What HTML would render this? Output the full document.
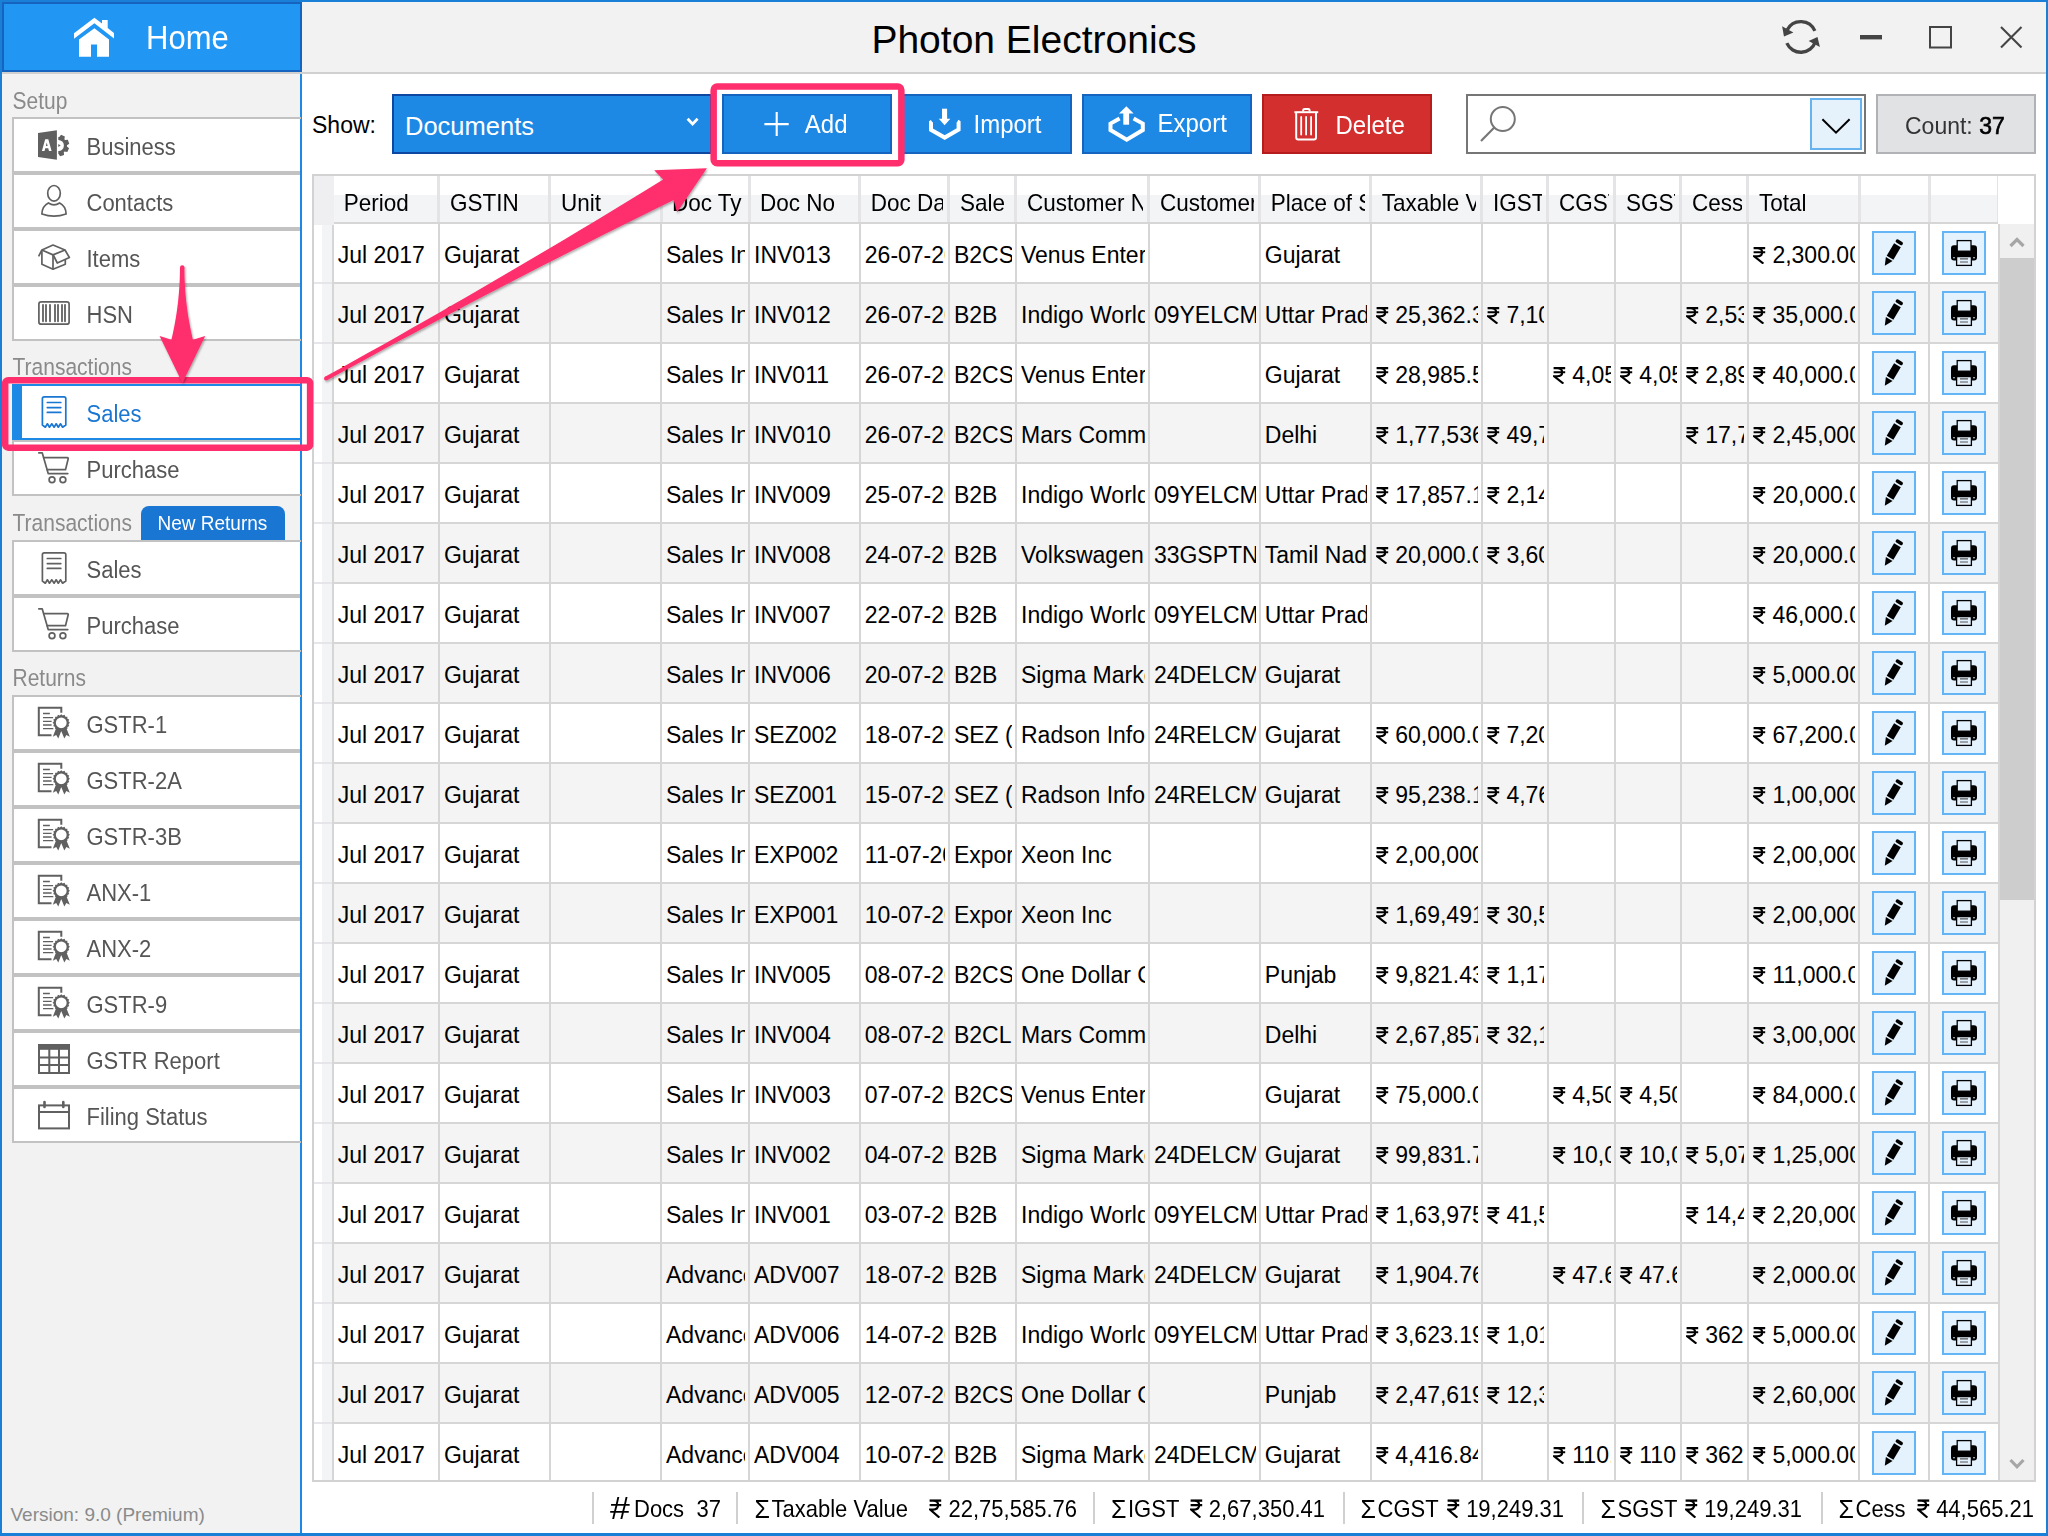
<!DOCTYPE html>
<html><head><meta charset="utf-8"><title>Photon Electronics</title>
<style>
html,body{margin:0;padding:0;}
body{width:2048px;height:1536px;overflow:hidden;position:relative;background:#fff;font-family:"Liberation Sans",sans-serif;}
.t{position:absolute;white-space:nowrap;}
.b{position:absolute;}
.c{position:absolute;white-space:nowrap;overflow:hidden;font-size:23px;color:#000;}
.rp{display:inline-block;width:13px;height:17px;vertical-align:-1px;margin-right:0px;}
svg.ov{position:absolute;left:0;top:0;}
</style></head><body>

<div class="b" style="left:2px;top:2px;width:2044px;height:70px;background:#f2f2f2;"></div>
<div class="b" style="left:2px;top:72px;width:2044px;height:2px;background:#d0d0d0;"></div>
<div class="b" style="left:2px;top:74px;width:298px;height:1459px;background:#f2f2f2;"></div>
<div class="b" style="left:300px;top:74px;width:2px;height:1459px;background:#1e88e5;"></div>
<div class="b" style="left:2px;top:2px;width:300px;height:70px;background:#2196f3;box-sizing:border-box;border:2px solid #1565c0;"></div>
<div class="t " style="left:146.0px;top:22.14px;font-size:31px;line-height:34.63px;color:#fff;transform:scaleY(1.05);transform-origin:0 28.06px;">Home</div>
<div class="t" style="left:302px;width:1464px;top:18.09px;font-size:39px;line-height:43.57px;text-align:center;color:#000;">Photon Electronics</div>
<div class="t " style="left:12.5px;top:89.79px;font-size:21px;line-height:23.46px;color:#8a8a8a;transform:scaleY(1.13);transform-origin:0 19.01px;">Setup</div>
<div class="b" style="left:12px;top:117px;width:289px;height:2px;background:#c2c2c2;"></div>
<div class="b" style="left:12px;top:117px;width:2px;height:224px;background:#c2c2c2;"></div>
<div class="b" style="left:12px;top:339px;width:289px;height:2px;background:#c2c2c2;"></div>
<div class="b" style="left:14px;top:119px;width:286px;height:52px;background:#fff;"></div>
<div class="b" style="left:14px;top:171px;width:286px;height:4px;background:#c2c2c2;"></div>
<div class="t " style="left:86.5px;top:135.88px;font-size:22px;line-height:24.58px;color:#555;transform:scaleY(1.09);transform-origin:0 19.92px;">Business</div>
<div class="b" style="left:14px;top:175px;width:286px;height:52px;background:#fff;"></div>
<div class="b" style="left:14px;top:227px;width:286px;height:4px;background:#c2c2c2;"></div>
<div class="t " style="left:86.5px;top:191.88px;font-size:22px;line-height:24.58px;color:#555;transform:scaleY(1.09);transform-origin:0 19.92px;">Contacts</div>
<div class="b" style="left:14px;top:231px;width:286px;height:52px;background:#fff;"></div>
<div class="b" style="left:14px;top:283px;width:286px;height:4px;background:#c2c2c2;"></div>
<div class="t " style="left:86.5px;top:247.88px;font-size:22px;line-height:24.58px;color:#555;transform:scaleY(1.09);transform-origin:0 19.92px;">Items</div>
<div class="b" style="left:14px;top:287px;width:286px;height:52px;background:#fff;"></div>
<div class="t " style="left:86.5px;top:303.88px;font-size:22px;line-height:24.58px;color:#555;transform:scaleY(1.09);transform-origin:0 19.92px;">HSN</div>
<div class="t " style="left:12.5px;top:356.29px;font-size:21px;line-height:23.46px;color:#8a8a8a;transform:scaleY(1.13);transform-origin:0 19.01px;">Transactions</div>
<div class="b" style="left:12px;top:384px;width:289px;height:2px;background:#c2c2c2;"></div>
<div class="b" style="left:12px;top:384px;width:2px;height:112px;background:#c2c2c2;"></div>
<div class="b" style="left:12px;top:494px;width:289px;height:2px;background:#c2c2c2;"></div>
<div class="b" style="left:14px;top:386px;width:286px;height:52px;background:#fff;"></div>
<div class="b" style="left:14px;top:438px;width:286px;height:4px;background:#c2c2c2;"></div>
<div class="t " style="left:86.5px;top:402.88px;font-size:22px;line-height:24.58px;color:#1976d2;transform:scaleY(1.09);transform-origin:0 19.92px;">Sales</div>
<div class="b" style="left:14px;top:442px;width:286px;height:52px;background:#fff;"></div>
<div class="t " style="left:86.5px;top:458.88px;font-size:22px;line-height:24.58px;color:#555;transform:scaleY(1.09);transform-origin:0 19.92px;">Purchase</div>
<div class="b" style="left:12px;top:384px;width:289px;height:2px;background:#1e88e5;"></div>
<div class="b" style="left:12px;top:438px;width:289px;height:2px;background:#1e88e5;"></div>
<div class="b" style="left:12px;top:384px;width:10px;height:56px;background:#1e88e5;"></div>
<div class="t " style="left:12.5px;top:511.79px;font-size:21px;line-height:23.46px;color:#8a8a8a;transform:scaleY(1.13);transform-origin:0 19.01px;">Transactions</div>
<div class="b" style="left:141px;top:506px;width:144px;height:34px;background:#1976d2;border-radius:8px 8px 0 0;"></div>
<div class="t " style="left:157.5px;top:512.60px;font-size:19px;line-height:21.23px;color:#fff;transform:scaleY(1.05);transform-origin:0 17.20px;">New Returns</div>
<div class="b" style="left:12px;top:540px;width:289px;height:2px;background:#c2c2c2;"></div>
<div class="b" style="left:12px;top:540px;width:2px;height:112px;background:#c2c2c2;"></div>
<div class="b" style="left:12px;top:650px;width:289px;height:2px;background:#c2c2c2;"></div>
<div class="b" style="left:14px;top:542px;width:286px;height:52px;background:#fff;"></div>
<div class="b" style="left:14px;top:594px;width:286px;height:4px;background:#c2c2c2;"></div>
<div class="t " style="left:86.5px;top:558.88px;font-size:22px;line-height:24.58px;color:#555;transform:scaleY(1.09);transform-origin:0 19.92px;">Sales</div>
<div class="b" style="left:14px;top:598px;width:286px;height:52px;background:#fff;"></div>
<div class="t " style="left:86.5px;top:614.88px;font-size:22px;line-height:24.58px;color:#555;transform:scaleY(1.09);transform-origin:0 19.92px;">Purchase</div>
<div class="t " style="left:12.5px;top:666.79px;font-size:21px;line-height:23.46px;color:#8a8a8a;transform:scaleY(1.13);transform-origin:0 19.01px;">Returns</div>
<div class="b" style="left:12px;top:695px;width:289px;height:2px;background:#c2c2c2;"></div>
<div class="b" style="left:12px;top:695px;width:2px;height:448px;background:#c2c2c2;"></div>
<div class="b" style="left:12px;top:1141px;width:289px;height:2px;background:#c2c2c2;"></div>
<div class="b" style="left:14px;top:697px;width:286px;height:52px;background:#fff;"></div>
<div class="b" style="left:14px;top:749px;width:286px;height:4px;background:#c2c2c2;"></div>
<div class="t " style="left:86.5px;top:713.88px;font-size:22px;line-height:24.58px;color:#555;transform:scaleY(1.09);transform-origin:0 19.92px;">GSTR-1</div>
<div class="b" style="left:14px;top:753px;width:286px;height:52px;background:#fff;"></div>
<div class="b" style="left:14px;top:805px;width:286px;height:4px;background:#c2c2c2;"></div>
<div class="t " style="left:86.5px;top:769.88px;font-size:22px;line-height:24.58px;color:#555;transform:scaleY(1.09);transform-origin:0 19.92px;">GSTR-2A</div>
<div class="b" style="left:14px;top:809px;width:286px;height:52px;background:#fff;"></div>
<div class="b" style="left:14px;top:861px;width:286px;height:4px;background:#c2c2c2;"></div>
<div class="t " style="left:86.5px;top:825.88px;font-size:22px;line-height:24.58px;color:#555;transform:scaleY(1.09);transform-origin:0 19.92px;">GSTR-3B</div>
<div class="b" style="left:14px;top:865px;width:286px;height:52px;background:#fff;"></div>
<div class="b" style="left:14px;top:917px;width:286px;height:4px;background:#c2c2c2;"></div>
<div class="t " style="left:86.5px;top:881.88px;font-size:22px;line-height:24.58px;color:#555;transform:scaleY(1.09);transform-origin:0 19.92px;">ANX-1</div>
<div class="b" style="left:14px;top:921px;width:286px;height:52px;background:#fff;"></div>
<div class="b" style="left:14px;top:973px;width:286px;height:4px;background:#c2c2c2;"></div>
<div class="t " style="left:86.5px;top:937.88px;font-size:22px;line-height:24.58px;color:#555;transform:scaleY(1.09);transform-origin:0 19.92px;">ANX-2</div>
<div class="b" style="left:14px;top:977px;width:286px;height:52px;background:#fff;"></div>
<div class="b" style="left:14px;top:1029px;width:286px;height:4px;background:#c2c2c2;"></div>
<div class="t " style="left:86.5px;top:993.88px;font-size:22px;line-height:24.58px;color:#555;transform:scaleY(1.09);transform-origin:0 19.92px;">GSTR-9</div>
<div class="b" style="left:14px;top:1033px;width:286px;height:52px;background:#fff;"></div>
<div class="b" style="left:14px;top:1085px;width:286px;height:4px;background:#c2c2c2;"></div>
<div class="t " style="left:86.5px;top:1049.88px;font-size:22px;line-height:24.58px;color:#555;transform:scaleY(1.09);transform-origin:0 19.92px;">GSTR Report</div>
<div class="b" style="left:14px;top:1089px;width:286px;height:52px;background:#fff;"></div>
<div class="t " style="left:86.5px;top:1105.88px;font-size:22px;line-height:24.58px;color:#555;transform:scaleY(1.09);transform-origin:0 19.92px;">Filing Status</div>
<div class="t " style="left:10.5px;top:1503.80px;font-size:19px;line-height:21.23px;color:#8a8a8a;">Version: 9.0 (Premium)</div>
<div class="t " style="left:312.0px;top:113.38px;font-size:23px;line-height:25.70px;color:#000;">Show:</div>
<div class="b" style="left:392px;top:94px;width:320px;height:60px;background:#1e88e5;box-sizing:border-box;border:2px solid #0d47a1;"></div>
<div class="t " style="left:405.0px;top:112.11px;font-size:25.5px;line-height:28.49px;color:#fff;">Documents</div>
<div class="b" style="left:722px;top:94px;width:170px;height:60px;background:#1e88e5;box-sizing:border-box;border:2px solid #1565c0;"></div>
<div class="t " style="left:804.8px;top:112.47px;font-size:24px;line-height:26.81px;color:#fff;transform:scaleY(1.06);transform-origin:0 21.73px;">Add</div>
<div class="b" style="left:902px;top:94px;width:170px;height:60px;background:#1e88e5;box-sizing:border-box;border:2px solid #1565c0;"></div>
<div class="t " style="left:973.5px;top:112.47px;font-size:24px;line-height:26.81px;color:#fff;transform:scaleY(1.06);transform-origin:0 21.73px;">Import</div>
<div class="b" style="left:1082px;top:94px;width:170px;height:60px;background:#1e88e5;box-sizing:border-box;border:2px solid #1565c0;"></div>
<div class="t " style="left:1157.5px;top:110.77px;font-size:24px;line-height:26.81px;color:#fff;transform:scaleY(1.06);transform-origin:0 21.73px;">Export</div>
<div class="b" style="left:1262px;top:94px;width:170px;height:60px;background:#d32f2f;box-sizing:border-box;border:2px solid #b71c1c;"></div>
<div class="t " style="left:1335.5px;top:112.67px;font-size:24px;line-height:26.81px;color:#fff;transform:scaleY(1.06);transform-origin:0 21.73px;">Delete</div>
<div class="b" style="left:1466px;top:94px;width:400px;height:60px;background:#fff;box-sizing:border-box;border:2px solid #767676;"></div>
<div class="b" style="left:1810px;top:98px;width:52px;height:52px;background:#e5f1fb;box-sizing:border-box;border:2px solid #66b3f0;"></div>
<div class="b" style="left:1876px;top:94px;width:160px;height:60px;background:#e1e2e4;box-sizing:border-box;border:2px solid #b0b2b6;"></div>
<div class="t " style="left:1905.0px;top:113.58px;font-size:23px;line-height:25.70px;color:#333;transform:scaleY(1.06);transform-origin:0 20.82px;">Count: <span style="color:#000;-webkit-text-stroke:0.6px #000;">37</span></div>
<div class="b" style="left:312px;top:174px;width:1724px;height:1308px;background:#fff;box-sizing:border-box;border:2px solid #d2d2d2;"></div>
<div class="b" style="left:314px;top:176px;width:1684px;height:19px;background:#ffffff;"></div>
<div class="b" style="left:314px;top:195px;width:1684px;height:27px;background:#f3f4f6;"></div>
<div class="b" style="left:314px;top:176px;width:20px;height:48px;background:#efeff1;"></div>
<div class="b" style="left:314px;top:222px;width:1684px;height:2px;background:#d6d6d6;"></div>
<div class="b" style="left:334px;top:224px;width:1664px;height:58px;background:#ffffff;"></div>
<div class="b" style="left:314px;top:224px;width:8px;height:58px;background:#ffffff;"></div>
<div class="b" style="left:322px;top:224px;width:10px;height:58px;background:#f3f4f6;"></div>
<div class="b" style="left:334px;top:282px;width:1664px;height:2px;background:#d6d6d6;"></div>
<div class="b" style="left:314px;top:282px;width:18px;height:3px;background:#e6e6ea;"></div>
<div class="b" style="left:334px;top:284px;width:1664px;height:58px;background:#f4f4f4;"></div>
<div class="b" style="left:314px;top:284px;width:8px;height:58px;background:#ffffff;"></div>
<div class="b" style="left:322px;top:284px;width:10px;height:58px;background:#f3f4f6;"></div>
<div class="b" style="left:334px;top:342px;width:1664px;height:2px;background:#d6d6d6;"></div>
<div class="b" style="left:314px;top:342px;width:18px;height:3px;background:#e6e6ea;"></div>
<div class="b" style="left:334px;top:344px;width:1664px;height:58px;background:#ffffff;"></div>
<div class="b" style="left:314px;top:344px;width:8px;height:58px;background:#ffffff;"></div>
<div class="b" style="left:322px;top:344px;width:10px;height:58px;background:#f3f4f6;"></div>
<div class="b" style="left:334px;top:402px;width:1664px;height:2px;background:#d6d6d6;"></div>
<div class="b" style="left:314px;top:402px;width:18px;height:3px;background:#e6e6ea;"></div>
<div class="b" style="left:334px;top:404px;width:1664px;height:58px;background:#f4f4f4;"></div>
<div class="b" style="left:314px;top:404px;width:8px;height:58px;background:#ffffff;"></div>
<div class="b" style="left:322px;top:404px;width:10px;height:58px;background:#f3f4f6;"></div>
<div class="b" style="left:334px;top:462px;width:1664px;height:2px;background:#d6d6d6;"></div>
<div class="b" style="left:314px;top:462px;width:18px;height:3px;background:#e6e6ea;"></div>
<div class="b" style="left:334px;top:464px;width:1664px;height:58px;background:#ffffff;"></div>
<div class="b" style="left:314px;top:464px;width:8px;height:58px;background:#ffffff;"></div>
<div class="b" style="left:322px;top:464px;width:10px;height:58px;background:#f3f4f6;"></div>
<div class="b" style="left:334px;top:522px;width:1664px;height:2px;background:#d6d6d6;"></div>
<div class="b" style="left:314px;top:522px;width:18px;height:3px;background:#e6e6ea;"></div>
<div class="b" style="left:334px;top:524px;width:1664px;height:58px;background:#f4f4f4;"></div>
<div class="b" style="left:314px;top:524px;width:8px;height:58px;background:#ffffff;"></div>
<div class="b" style="left:322px;top:524px;width:10px;height:58px;background:#f3f4f6;"></div>
<div class="b" style="left:334px;top:582px;width:1664px;height:2px;background:#d6d6d6;"></div>
<div class="b" style="left:314px;top:582px;width:18px;height:3px;background:#e6e6ea;"></div>
<div class="b" style="left:334px;top:584px;width:1664px;height:58px;background:#ffffff;"></div>
<div class="b" style="left:314px;top:584px;width:8px;height:58px;background:#ffffff;"></div>
<div class="b" style="left:322px;top:584px;width:10px;height:58px;background:#f3f4f6;"></div>
<div class="b" style="left:334px;top:642px;width:1664px;height:2px;background:#d6d6d6;"></div>
<div class="b" style="left:314px;top:642px;width:18px;height:3px;background:#e6e6ea;"></div>
<div class="b" style="left:334px;top:644px;width:1664px;height:58px;background:#f4f4f4;"></div>
<div class="b" style="left:314px;top:644px;width:8px;height:58px;background:#ffffff;"></div>
<div class="b" style="left:322px;top:644px;width:10px;height:58px;background:#f3f4f6;"></div>
<div class="b" style="left:334px;top:702px;width:1664px;height:2px;background:#d6d6d6;"></div>
<div class="b" style="left:314px;top:702px;width:18px;height:3px;background:#e6e6ea;"></div>
<div class="b" style="left:334px;top:704px;width:1664px;height:58px;background:#ffffff;"></div>
<div class="b" style="left:314px;top:704px;width:8px;height:58px;background:#ffffff;"></div>
<div class="b" style="left:322px;top:704px;width:10px;height:58px;background:#f3f4f6;"></div>
<div class="b" style="left:334px;top:762px;width:1664px;height:2px;background:#d6d6d6;"></div>
<div class="b" style="left:314px;top:762px;width:18px;height:3px;background:#e6e6ea;"></div>
<div class="b" style="left:334px;top:764px;width:1664px;height:58px;background:#f4f4f4;"></div>
<div class="b" style="left:314px;top:764px;width:8px;height:58px;background:#ffffff;"></div>
<div class="b" style="left:322px;top:764px;width:10px;height:58px;background:#f3f4f6;"></div>
<div class="b" style="left:334px;top:822px;width:1664px;height:2px;background:#d6d6d6;"></div>
<div class="b" style="left:314px;top:822px;width:18px;height:3px;background:#e6e6ea;"></div>
<div class="b" style="left:334px;top:824px;width:1664px;height:58px;background:#ffffff;"></div>
<div class="b" style="left:314px;top:824px;width:8px;height:58px;background:#ffffff;"></div>
<div class="b" style="left:322px;top:824px;width:10px;height:58px;background:#f3f4f6;"></div>
<div class="b" style="left:334px;top:882px;width:1664px;height:2px;background:#d6d6d6;"></div>
<div class="b" style="left:314px;top:882px;width:18px;height:3px;background:#e6e6ea;"></div>
<div class="b" style="left:334px;top:884px;width:1664px;height:58px;background:#f4f4f4;"></div>
<div class="b" style="left:314px;top:884px;width:8px;height:58px;background:#ffffff;"></div>
<div class="b" style="left:322px;top:884px;width:10px;height:58px;background:#f3f4f6;"></div>
<div class="b" style="left:334px;top:942px;width:1664px;height:2px;background:#d6d6d6;"></div>
<div class="b" style="left:314px;top:942px;width:18px;height:3px;background:#e6e6ea;"></div>
<div class="b" style="left:334px;top:944px;width:1664px;height:58px;background:#ffffff;"></div>
<div class="b" style="left:314px;top:944px;width:8px;height:58px;background:#ffffff;"></div>
<div class="b" style="left:322px;top:944px;width:10px;height:58px;background:#f3f4f6;"></div>
<div class="b" style="left:334px;top:1002px;width:1664px;height:2px;background:#d6d6d6;"></div>
<div class="b" style="left:314px;top:1002px;width:18px;height:3px;background:#e6e6ea;"></div>
<div class="b" style="left:334px;top:1004px;width:1664px;height:58px;background:#f4f4f4;"></div>
<div class="b" style="left:314px;top:1004px;width:8px;height:58px;background:#ffffff;"></div>
<div class="b" style="left:322px;top:1004px;width:10px;height:58px;background:#f3f4f6;"></div>
<div class="b" style="left:334px;top:1062px;width:1664px;height:2px;background:#d6d6d6;"></div>
<div class="b" style="left:314px;top:1062px;width:18px;height:3px;background:#e6e6ea;"></div>
<div class="b" style="left:334px;top:1064px;width:1664px;height:58px;background:#ffffff;"></div>
<div class="b" style="left:314px;top:1064px;width:8px;height:58px;background:#ffffff;"></div>
<div class="b" style="left:322px;top:1064px;width:10px;height:58px;background:#f3f4f6;"></div>
<div class="b" style="left:334px;top:1122px;width:1664px;height:2px;background:#d6d6d6;"></div>
<div class="b" style="left:314px;top:1122px;width:18px;height:3px;background:#e6e6ea;"></div>
<div class="b" style="left:334px;top:1124px;width:1664px;height:58px;background:#f4f4f4;"></div>
<div class="b" style="left:314px;top:1124px;width:8px;height:58px;background:#ffffff;"></div>
<div class="b" style="left:322px;top:1124px;width:10px;height:58px;background:#f3f4f6;"></div>
<div class="b" style="left:334px;top:1182px;width:1664px;height:2px;background:#d6d6d6;"></div>
<div class="b" style="left:314px;top:1182px;width:18px;height:3px;background:#e6e6ea;"></div>
<div class="b" style="left:334px;top:1184px;width:1664px;height:58px;background:#ffffff;"></div>
<div class="b" style="left:314px;top:1184px;width:8px;height:58px;background:#ffffff;"></div>
<div class="b" style="left:322px;top:1184px;width:10px;height:58px;background:#f3f4f6;"></div>
<div class="b" style="left:334px;top:1242px;width:1664px;height:2px;background:#d6d6d6;"></div>
<div class="b" style="left:314px;top:1242px;width:18px;height:3px;background:#e6e6ea;"></div>
<div class="b" style="left:334px;top:1244px;width:1664px;height:58px;background:#f4f4f4;"></div>
<div class="b" style="left:314px;top:1244px;width:8px;height:58px;background:#ffffff;"></div>
<div class="b" style="left:322px;top:1244px;width:10px;height:58px;background:#f3f4f6;"></div>
<div class="b" style="left:334px;top:1302px;width:1664px;height:2px;background:#d6d6d6;"></div>
<div class="b" style="left:314px;top:1302px;width:18px;height:3px;background:#e6e6ea;"></div>
<div class="b" style="left:334px;top:1304px;width:1664px;height:58px;background:#ffffff;"></div>
<div class="b" style="left:314px;top:1304px;width:8px;height:58px;background:#ffffff;"></div>
<div class="b" style="left:322px;top:1304px;width:10px;height:58px;background:#f3f4f6;"></div>
<div class="b" style="left:334px;top:1362px;width:1664px;height:2px;background:#d6d6d6;"></div>
<div class="b" style="left:314px;top:1362px;width:18px;height:3px;background:#e6e6ea;"></div>
<div class="b" style="left:334px;top:1364px;width:1664px;height:58px;background:#f4f4f4;"></div>
<div class="b" style="left:314px;top:1364px;width:8px;height:58px;background:#ffffff;"></div>
<div class="b" style="left:322px;top:1364px;width:10px;height:58px;background:#f3f4f6;"></div>
<div class="b" style="left:334px;top:1422px;width:1664px;height:2px;background:#d6d6d6;"></div>
<div class="b" style="left:314px;top:1422px;width:18px;height:3px;background:#e6e6ea;"></div>
<div class="b" style="left:334px;top:1424px;width:1664px;height:56px;background:#ffffff;"></div>
<div class="b" style="left:314px;top:1424px;width:8px;height:56px;background:#ffffff;"></div>
<div class="b" style="left:322px;top:1424px;width:10px;height:56px;background:#f3f4f6;"></div>
<div class="b" style="left:332px;top:224px;width:2px;height:1256px;background:#d6d6d6;"></div>
<div class="b" style="left:438px;top:224px;width:2px;height:1256px;background:#d6d6d6;"></div>
<div class="b" style="left:549px;top:224px;width:2px;height:1256px;background:#d6d6d6;"></div>
<div class="b" style="left:660px;top:224px;width:2px;height:1256px;background:#d6d6d6;"></div>
<div class="b" style="left:748px;top:224px;width:2px;height:1256px;background:#d6d6d6;"></div>
<div class="b" style="left:859px;top:224px;width:2px;height:1256px;background:#d6d6d6;"></div>
<div class="b" style="left:948px;top:224px;width:2px;height:1256px;background:#d6d6d6;"></div>
<div class="b" style="left:1015px;top:224px;width:2px;height:1256px;background:#d6d6d6;"></div>
<div class="b" style="left:1148px;top:224px;width:2px;height:1256px;background:#d6d6d6;"></div>
<div class="b" style="left:1259px;top:224px;width:2px;height:1256px;background:#d6d6d6;"></div>
<div class="b" style="left:1370px;top:224px;width:2px;height:1256px;background:#d6d6d6;"></div>
<div class="b" style="left:1481px;top:224px;width:2px;height:1256px;background:#d6d6d6;"></div>
<div class="b" style="left:1547px;top:224px;width:2px;height:1256px;background:#d6d6d6;"></div>
<div class="b" style="left:1614px;top:224px;width:2px;height:1256px;background:#d6d6d6;"></div>
<div class="b" style="left:1680px;top:224px;width:2px;height:1256px;background:#d6d6d6;"></div>
<div class="b" style="left:1747px;top:224px;width:2px;height:1256px;background:#d6d6d6;"></div>
<div class="b" style="left:1858px;top:224px;width:2px;height:1256px;background:#d6d6d6;"></div>
<div class="b" style="left:1928px;top:224px;width:2px;height:1256px;background:#d6d6d6;"></div>
<div class="b" style="left:1998px;top:224px;width:2px;height:1256px;background:#d6d6d6;"></div>
<div class="b" style="left:437px;top:176px;width:3px;height:46px;background:#e4e4e6;"></div>
<div class="b" style="left:548px;top:176px;width:3px;height:46px;background:#e4e4e6;"></div>
<div class="b" style="left:660px;top:176px;width:3px;height:46px;background:#e4e4e6;"></div>
<div class="b" style="left:748px;top:176px;width:3px;height:46px;background:#e4e4e6;"></div>
<div class="b" style="left:858px;top:176px;width:3px;height:46px;background:#e4e4e6;"></div>
<div class="b" style="left:947px;top:176px;width:3px;height:46px;background:#e4e4e6;"></div>
<div class="b" style="left:1014px;top:176px;width:3px;height:46px;background:#e4e4e6;"></div>
<div class="b" style="left:1147px;top:176px;width:3px;height:46px;background:#e4e4e6;"></div>
<div class="b" style="left:1258px;top:176px;width:3px;height:46px;background:#e4e4e6;"></div>
<div class="b" style="left:1369px;top:176px;width:3px;height:46px;background:#e4e4e6;"></div>
<div class="b" style="left:1480px;top:176px;width:3px;height:46px;background:#e4e4e6;"></div>
<div class="b" style="left:1546px;top:176px;width:3px;height:46px;background:#e4e4e6;"></div>
<div class="b" style="left:1613px;top:176px;width:3px;height:46px;background:#e4e4e6;"></div>
<div class="b" style="left:1679px;top:176px;width:3px;height:46px;background:#e4e4e6;"></div>
<div class="b" style="left:1746px;top:176px;width:3px;height:46px;background:#e4e4e6;"></div>
<div class="b" style="left:1858px;top:176px;width:3px;height:46px;background:#e4e4e6;"></div>
<div class="b" style="left:1928px;top:176px;width:3px;height:46px;background:#e4e4e6;"></div>
<div class="b" style="left:1997px;top:176px;width:3px;height:46px;background:#e4e4e6;"></div>
<div class="b" style="left:314px;top:176px;width:20px;height:49px;background:#efeff1;"></div>
<div class="c" style="left:343.8px;top:190.53px;width:89.1px;font-size:22.5px;line-height:25.14px;transform:scaleY(1.04);transform-origin:0 20.37px;">Period</div>
<div class="c" style="left:449.9px;top:190.53px;width:94.0px;font-size:22.5px;line-height:25.14px;transform:scaleY(1.04);transform-origin:0 20.37px;">GSTIN</div>
<div class="c" style="left:560.9px;top:190.53px;width:94.1px;font-size:22.5px;line-height:25.14px;transform:scaleY(1.04);transform-origin:0 20.37px;">Unit</div>
<div class="c" style="left:672.0px;top:190.53px;width:71.0px;font-size:22.5px;line-height:25.14px;transform:scaleY(1.04);transform-origin:0 20.37px;">Doc Type</div>
<div class="c" style="left:760.0px;top:190.53px;width:93.8px;font-size:22.5px;line-height:25.14px;transform:scaleY(1.04);transform-origin:0 20.37px;">Doc No</div>
<div class="c" style="left:870.8px;top:190.53px;width:72.1px;font-size:22.5px;line-height:25.14px;transform:scaleY(1.04);transform-origin:0 20.37px;">Doc Date</div>
<div class="c" style="left:959.9px;top:190.53px;width:50.1px;font-size:22.5px;line-height:25.14px;transform:scaleY(1.04);transform-origin:0 20.37px;">Sale Type</div>
<div class="c" style="left:1027.0px;top:190.53px;width:115.9px;font-size:22.5px;line-height:25.14px;transform:scaleY(1.04);transform-origin:0 20.37px;">Customer Name</div>
<div class="c" style="left:1159.9px;top:190.53px;width:93.8px;font-size:22.5px;line-height:25.14px;transform:scaleY(1.04);transform-origin:0 20.37px;">Customer GSTIN</div>
<div class="c" style="left:1270.8px;top:190.53px;width:94.0px;font-size:22.5px;line-height:25.14px;transform:scaleY(1.04);transform-origin:0 20.37px;">Place of Supply</div>
<div class="c" style="left:1381.8px;top:190.53px;width:94.2px;font-size:22.5px;line-height:25.14px;transform:scaleY(1.04);transform-origin:0 20.37px;">Taxable Value</div>
<div class="c" style="left:1493.0px;top:190.53px;width:48.9px;font-size:22.5px;line-height:25.14px;transform:scaleY(1.04);transform-origin:0 20.37px;">IGST</div>
<div class="c" style="left:1558.9px;top:190.53px;width:50.0px;font-size:22.5px;line-height:25.14px;transform:scaleY(1.04);transform-origin:0 20.37px;">CGST</div>
<div class="c" style="left:1625.9px;top:190.53px;width:49.0px;font-size:22.5px;line-height:25.14px;transform:scaleY(1.04);transform-origin:0 20.37px;">SGST</div>
<div class="c" style="left:1691.9px;top:190.53px;width:50.1px;font-size:22.5px;line-height:25.14px;transform:scaleY(1.04);transform-origin:0 20.37px;">Cess</div>
<div class="c" style="left:1759.0px;top:190.53px;width:94.0px;font-size:22.5px;line-height:25.14px;transform:scaleY(1.04);transform-origin:0 20.37px;">Total</div>
<div class="c" style="left:337.8px;top:242.68px;width:97.1px;line-height:25.70px;">Jul 2017</div>
<div class="c" style="left:443.9px;top:242.68px;width:102.0px;line-height:25.70px;">Gujarat</div>
<div class="c" style="left:666.0px;top:242.68px;width:79.0px;line-height:25.70px;">Sales Invoice</div>
<div class="c" style="left:754.0px;top:242.68px;width:101.8px;line-height:25.70px;">INV013</div>
<div class="c" style="left:864.8px;top:242.68px;width:80.1px;line-height:25.70px;">26-07-2017</div>
<div class="c" style="left:953.9px;top:242.68px;width:58.1px;line-height:25.70px;">B2CS</div>
<div class="c" style="left:1021.0px;top:242.68px;width:123.9px;line-height:25.70px;">Venus Enterprises</div>
<div class="c" style="left:1264.8px;top:242.68px;width:102.0px;line-height:25.70px;">Gujarat</div>
<div class="c" style="left:1753.0px;top:242.68px;width:102.0px;line-height:25.70px;"><svg class="rp" viewBox="0 0 13 17"><use href="#rup"/></svg> 2,300.00</div>
<div class="b" style="left:1872px;top:231px;width:44px;height:44px;background:#e3f2fd;box-sizing:border-box;border:2px solid #64b5f6;"></div>
<div class="b" style="left:1942px;top:231px;width:44px;height:44px;background:#e3f2fd;box-sizing:border-box;border:2px solid #64b5f6;"></div>
<div class="c" style="left:337.8px;top:302.68px;width:97.1px;line-height:25.70px;">Jul 2017</div>
<div class="c" style="left:443.9px;top:302.68px;width:102.0px;line-height:25.70px;">Gujarat</div>
<div class="c" style="left:666.0px;top:302.68px;width:79.0px;line-height:25.70px;">Sales Invoice</div>
<div class="c" style="left:754.0px;top:302.68px;width:101.8px;line-height:25.70px;">INV012</div>
<div class="c" style="left:864.8px;top:302.68px;width:80.1px;line-height:25.70px;">26-07-2017</div>
<div class="c" style="left:953.9px;top:302.68px;width:58.1px;line-height:25.70px;">B2B</div>
<div class="c" style="left:1021.0px;top:302.68px;width:123.9px;line-height:25.70px;">Indigo World</div>
<div class="c" style="left:1153.9px;top:302.68px;width:101.8px;line-height:25.70px;">09YELCM5678A1Z1</div>
<div class="c" style="left:1264.8px;top:302.68px;width:102.0px;line-height:25.70px;">Uttar Pradesh</div>
<div class="c" style="left:1375.8px;top:302.68px;width:102.2px;line-height:25.70px;"><svg class="rp" viewBox="0 0 13 17"><use href="#rup"/></svg> 25,362.32</div>
<div class="c" style="left:1487.0px;top:302.68px;width:56.9px;line-height:25.70px;"><svg class="rp" viewBox="0 0 13 17"><use href="#rup"/></svg> 7,101.45</div>
<div class="c" style="left:1685.9px;top:302.68px;width:58.1px;line-height:25.70px;"><svg class="rp" viewBox="0 0 13 17"><use href="#rup"/></svg> 2,536.23</div>
<div class="c" style="left:1753.0px;top:302.68px;width:102.0px;line-height:25.70px;"><svg class="rp" viewBox="0 0 13 17"><use href="#rup"/></svg> 35,000.00</div>
<div class="b" style="left:1872px;top:291px;width:44px;height:44px;background:#e3f2fd;box-sizing:border-box;border:2px solid #64b5f6;"></div>
<div class="b" style="left:1942px;top:291px;width:44px;height:44px;background:#e3f2fd;box-sizing:border-box;border:2px solid #64b5f6;"></div>
<div class="c" style="left:337.8px;top:362.68px;width:97.1px;line-height:25.70px;">Jul 2017</div>
<div class="c" style="left:443.9px;top:362.68px;width:102.0px;line-height:25.70px;">Gujarat</div>
<div class="c" style="left:666.0px;top:362.68px;width:79.0px;line-height:25.70px;">Sales Invoice</div>
<div class="c" style="left:754.0px;top:362.68px;width:101.8px;line-height:25.70px;">INV011</div>
<div class="c" style="left:864.8px;top:362.68px;width:80.1px;line-height:25.70px;">26-07-2017</div>
<div class="c" style="left:953.9px;top:362.68px;width:58.1px;line-height:25.70px;">B2CS</div>
<div class="c" style="left:1021.0px;top:362.68px;width:123.9px;line-height:25.70px;">Venus Enterprises</div>
<div class="c" style="left:1264.8px;top:362.68px;width:102.0px;line-height:25.70px;">Gujarat</div>
<div class="c" style="left:1375.8px;top:362.68px;width:102.2px;line-height:25.70px;"><svg class="rp" viewBox="0 0 13 17"><use href="#rup"/></svg> 28,985.51</div>
<div class="c" style="left:1552.9px;top:362.68px;width:58.0px;line-height:25.70px;"><svg class="rp" viewBox="0 0 13 17"><use href="#rup"/></svg> 4,057.97</div>
<div class="c" style="left:1619.9px;top:362.68px;width:57.0px;line-height:25.70px;"><svg class="rp" viewBox="0 0 13 17"><use href="#rup"/></svg> 4,057.97</div>
<div class="c" style="left:1685.9px;top:362.68px;width:58.1px;line-height:25.70px;"><svg class="rp" viewBox="0 0 13 17"><use href="#rup"/></svg> 2,898.55</div>
<div class="c" style="left:1753.0px;top:362.68px;width:102.0px;line-height:25.70px;"><svg class="rp" viewBox="0 0 13 17"><use href="#rup"/></svg> 40,000.00</div>
<div class="b" style="left:1872px;top:351px;width:44px;height:44px;background:#e3f2fd;box-sizing:border-box;border:2px solid #64b5f6;"></div>
<div class="b" style="left:1942px;top:351px;width:44px;height:44px;background:#e3f2fd;box-sizing:border-box;border:2px solid #64b5f6;"></div>
<div class="c" style="left:337.8px;top:422.68px;width:97.1px;line-height:25.70px;">Jul 2017</div>
<div class="c" style="left:443.9px;top:422.68px;width:102.0px;line-height:25.70px;">Gujarat</div>
<div class="c" style="left:666.0px;top:422.68px;width:79.0px;line-height:25.70px;">Sales Invoice</div>
<div class="c" style="left:754.0px;top:422.68px;width:101.8px;line-height:25.70px;">INV010</div>
<div class="c" style="left:864.8px;top:422.68px;width:80.1px;line-height:25.70px;">26-07-2017</div>
<div class="c" style="left:953.9px;top:422.68px;width:58.1px;line-height:25.70px;">B2CS</div>
<div class="c" style="left:1021.0px;top:422.68px;width:123.9px;line-height:25.70px;">Mars Communications</div>
<div class="c" style="left:1264.8px;top:422.68px;width:102.0px;line-height:25.70px;">Delhi</div>
<div class="c" style="left:1375.8px;top:422.68px;width:102.2px;line-height:25.70px;"><svg class="rp" viewBox="0 0 13 17"><use href="#rup"/></svg> 1,77,536.23</div>
<div class="c" style="left:1487.0px;top:422.68px;width:56.9px;line-height:25.70px;"><svg class="rp" viewBox="0 0 13 17"><use href="#rup"/></svg> 49,710.14</div>
<div class="c" style="left:1685.9px;top:422.68px;width:58.1px;line-height:25.70px;"><svg class="rp" viewBox="0 0 13 17"><use href="#rup"/></svg> 17,753.62</div>
<div class="c" style="left:1753.0px;top:422.68px;width:102.0px;line-height:25.70px;"><svg class="rp" viewBox="0 0 13 17"><use href="#rup"/></svg> 2,45,000.00</div>
<div class="b" style="left:1872px;top:411px;width:44px;height:44px;background:#e3f2fd;box-sizing:border-box;border:2px solid #64b5f6;"></div>
<div class="b" style="left:1942px;top:411px;width:44px;height:44px;background:#e3f2fd;box-sizing:border-box;border:2px solid #64b5f6;"></div>
<div class="c" style="left:337.8px;top:482.68px;width:97.1px;line-height:25.70px;">Jul 2017</div>
<div class="c" style="left:443.9px;top:482.68px;width:102.0px;line-height:25.70px;">Gujarat</div>
<div class="c" style="left:666.0px;top:482.68px;width:79.0px;line-height:25.70px;">Sales Invoice</div>
<div class="c" style="left:754.0px;top:482.68px;width:101.8px;line-height:25.70px;">INV009</div>
<div class="c" style="left:864.8px;top:482.68px;width:80.1px;line-height:25.70px;">25-07-2017</div>
<div class="c" style="left:953.9px;top:482.68px;width:58.1px;line-height:25.70px;">B2B</div>
<div class="c" style="left:1021.0px;top:482.68px;width:123.9px;line-height:25.70px;">Indigo World</div>
<div class="c" style="left:1153.9px;top:482.68px;width:101.8px;line-height:25.70px;">09YELCM5678A1Z1</div>
<div class="c" style="left:1264.8px;top:482.68px;width:102.0px;line-height:25.70px;">Uttar Pradesh</div>
<div class="c" style="left:1375.8px;top:482.68px;width:102.2px;line-height:25.70px;"><svg class="rp" viewBox="0 0 13 17"><use href="#rup"/></svg> 17,857.14</div>
<div class="c" style="left:1487.0px;top:482.68px;width:56.9px;line-height:25.70px;"><svg class="rp" viewBox="0 0 13 17"><use href="#rup"/></svg> 2,142.86</div>
<div class="c" style="left:1753.0px;top:482.68px;width:102.0px;line-height:25.70px;"><svg class="rp" viewBox="0 0 13 17"><use href="#rup"/></svg> 20,000.00</div>
<div class="b" style="left:1872px;top:471px;width:44px;height:44px;background:#e3f2fd;box-sizing:border-box;border:2px solid #64b5f6;"></div>
<div class="b" style="left:1942px;top:471px;width:44px;height:44px;background:#e3f2fd;box-sizing:border-box;border:2px solid #64b5f6;"></div>
<div class="c" style="left:337.8px;top:542.68px;width:97.1px;line-height:25.70px;">Jul 2017</div>
<div class="c" style="left:443.9px;top:542.68px;width:102.0px;line-height:25.70px;">Gujarat</div>
<div class="c" style="left:666.0px;top:542.68px;width:79.0px;line-height:25.70px;">Sales Invoice</div>
<div class="c" style="left:754.0px;top:542.68px;width:101.8px;line-height:25.70px;">INV008</div>
<div class="c" style="left:864.8px;top:542.68px;width:80.1px;line-height:25.70px;">24-07-2017</div>
<div class="c" style="left:953.9px;top:542.68px;width:58.1px;line-height:25.70px;">B2B</div>
<div class="c" style="left:1021.0px;top:542.68px;width:123.9px;line-height:25.70px;">Volkswagen</div>
<div class="c" style="left:1153.9px;top:542.68px;width:101.8px;line-height:25.70px;">33GSPTN8765A1Z1</div>
<div class="c" style="left:1264.8px;top:542.68px;width:102.0px;line-height:25.70px;">Tamil Nadu</div>
<div class="c" style="left:1375.8px;top:542.68px;width:102.2px;line-height:25.70px;"><svg class="rp" viewBox="0 0 13 17"><use href="#rup"/></svg> 20,000.00</div>
<div class="c" style="left:1487.0px;top:542.68px;width:56.9px;line-height:25.70px;"><svg class="rp" viewBox="0 0 13 17"><use href="#rup"/></svg> 3,600.00</div>
<div class="c" style="left:1753.0px;top:542.68px;width:102.0px;line-height:25.70px;"><svg class="rp" viewBox="0 0 13 17"><use href="#rup"/></svg> 20,000.00</div>
<div class="b" style="left:1872px;top:531px;width:44px;height:44px;background:#e3f2fd;box-sizing:border-box;border:2px solid #64b5f6;"></div>
<div class="b" style="left:1942px;top:531px;width:44px;height:44px;background:#e3f2fd;box-sizing:border-box;border:2px solid #64b5f6;"></div>
<div class="c" style="left:337.8px;top:602.68px;width:97.1px;line-height:25.70px;">Jul 2017</div>
<div class="c" style="left:443.9px;top:602.68px;width:102.0px;line-height:25.70px;">Gujarat</div>
<div class="c" style="left:666.0px;top:602.68px;width:79.0px;line-height:25.70px;">Sales Invoice</div>
<div class="c" style="left:754.0px;top:602.68px;width:101.8px;line-height:25.70px;">INV007</div>
<div class="c" style="left:864.8px;top:602.68px;width:80.1px;line-height:25.70px;">22-07-2017</div>
<div class="c" style="left:953.9px;top:602.68px;width:58.1px;line-height:25.70px;">B2B</div>
<div class="c" style="left:1021.0px;top:602.68px;width:123.9px;line-height:25.70px;">Indigo World</div>
<div class="c" style="left:1153.9px;top:602.68px;width:101.8px;line-height:25.70px;">09YELCM5678A1Z1</div>
<div class="c" style="left:1264.8px;top:602.68px;width:102.0px;line-height:25.70px;">Uttar Pradesh</div>
<div class="c" style="left:1753.0px;top:602.68px;width:102.0px;line-height:25.70px;"><svg class="rp" viewBox="0 0 13 17"><use href="#rup"/></svg> 46,000.00</div>
<div class="b" style="left:1872px;top:591px;width:44px;height:44px;background:#e3f2fd;box-sizing:border-box;border:2px solid #64b5f6;"></div>
<div class="b" style="left:1942px;top:591px;width:44px;height:44px;background:#e3f2fd;box-sizing:border-box;border:2px solid #64b5f6;"></div>
<div class="c" style="left:337.8px;top:662.68px;width:97.1px;line-height:25.70px;">Jul 2017</div>
<div class="c" style="left:443.9px;top:662.68px;width:102.0px;line-height:25.70px;">Gujarat</div>
<div class="c" style="left:666.0px;top:662.68px;width:79.0px;line-height:25.70px;">Sales Invoice</div>
<div class="c" style="left:754.0px;top:662.68px;width:101.8px;line-height:25.70px;">INV006</div>
<div class="c" style="left:864.8px;top:662.68px;width:80.1px;line-height:25.70px;">20-07-2017</div>
<div class="c" style="left:953.9px;top:662.68px;width:58.1px;line-height:25.70px;">B2B</div>
<div class="c" style="left:1021.0px;top:662.68px;width:123.9px;line-height:25.70px;">Sigma Marketing</div>
<div class="c" style="left:1153.9px;top:662.68px;width:101.8px;line-height:25.70px;">24DELCM1234A1Z1</div>
<div class="c" style="left:1264.8px;top:662.68px;width:102.0px;line-height:25.70px;">Gujarat</div>
<div class="c" style="left:1753.0px;top:662.68px;width:102.0px;line-height:25.70px;"><svg class="rp" viewBox="0 0 13 17"><use href="#rup"/></svg> 5,000.00</div>
<div class="b" style="left:1872px;top:651px;width:44px;height:44px;background:#e3f2fd;box-sizing:border-box;border:2px solid #64b5f6;"></div>
<div class="b" style="left:1942px;top:651px;width:44px;height:44px;background:#e3f2fd;box-sizing:border-box;border:2px solid #64b5f6;"></div>
<div class="c" style="left:337.8px;top:722.68px;width:97.1px;line-height:25.70px;">Jul 2017</div>
<div class="c" style="left:443.9px;top:722.68px;width:102.0px;line-height:25.70px;">Gujarat</div>
<div class="c" style="left:666.0px;top:722.68px;width:79.0px;line-height:25.70px;">Sales Invoice</div>
<div class="c" style="left:754.0px;top:722.68px;width:101.8px;line-height:25.70px;">SEZ002</div>
<div class="c" style="left:864.8px;top:722.68px;width:80.1px;line-height:25.70px;">18-07-2017</div>
<div class="c" style="left:953.9px;top:722.68px;width:58.1px;line-height:25.70px;">SEZ (with payment)</div>
<div class="c" style="left:1021.0px;top:722.68px;width:123.9px;line-height:25.70px;">Radson Infotech</div>
<div class="c" style="left:1153.9px;top:722.68px;width:101.8px;line-height:25.70px;">24RELCM4321A1Z1</div>
<div class="c" style="left:1264.8px;top:722.68px;width:102.0px;line-height:25.70px;">Gujarat</div>
<div class="c" style="left:1375.8px;top:722.68px;width:102.2px;line-height:25.70px;"><svg class="rp" viewBox="0 0 13 17"><use href="#rup"/></svg> 60,000.00</div>
<div class="c" style="left:1487.0px;top:722.68px;width:56.9px;line-height:25.70px;"><svg class="rp" viewBox="0 0 13 17"><use href="#rup"/></svg> 7,200.00</div>
<div class="c" style="left:1753.0px;top:722.68px;width:102.0px;line-height:25.70px;"><svg class="rp" viewBox="0 0 13 17"><use href="#rup"/></svg> 67,200.00</div>
<div class="b" style="left:1872px;top:711px;width:44px;height:44px;background:#e3f2fd;box-sizing:border-box;border:2px solid #64b5f6;"></div>
<div class="b" style="left:1942px;top:711px;width:44px;height:44px;background:#e3f2fd;box-sizing:border-box;border:2px solid #64b5f6;"></div>
<div class="c" style="left:337.8px;top:782.68px;width:97.1px;line-height:25.70px;">Jul 2017</div>
<div class="c" style="left:443.9px;top:782.68px;width:102.0px;line-height:25.70px;">Gujarat</div>
<div class="c" style="left:666.0px;top:782.68px;width:79.0px;line-height:25.70px;">Sales Invoice</div>
<div class="c" style="left:754.0px;top:782.68px;width:101.8px;line-height:25.70px;">SEZ001</div>
<div class="c" style="left:864.8px;top:782.68px;width:80.1px;line-height:25.70px;">15-07-2017</div>
<div class="c" style="left:953.9px;top:782.68px;width:58.1px;line-height:25.70px;">SEZ (without payment)</div>
<div class="c" style="left:1021.0px;top:782.68px;width:123.9px;line-height:25.70px;">Radson Infotech</div>
<div class="c" style="left:1153.9px;top:782.68px;width:101.8px;line-height:25.70px;">24RELCM4321A1Z1</div>
<div class="c" style="left:1264.8px;top:782.68px;width:102.0px;line-height:25.70px;">Gujarat</div>
<div class="c" style="left:1375.8px;top:782.68px;width:102.2px;line-height:25.70px;"><svg class="rp" viewBox="0 0 13 17"><use href="#rup"/></svg> 95,238.10</div>
<div class="c" style="left:1487.0px;top:782.68px;width:56.9px;line-height:25.70px;"><svg class="rp" viewBox="0 0 13 17"><use href="#rup"/></svg> 4,761.90</div>
<div class="c" style="left:1753.0px;top:782.68px;width:102.0px;line-height:25.70px;"><svg class="rp" viewBox="0 0 13 17"><use href="#rup"/></svg> 1,00,000.00</div>
<div class="b" style="left:1872px;top:771px;width:44px;height:44px;background:#e3f2fd;box-sizing:border-box;border:2px solid #64b5f6;"></div>
<div class="b" style="left:1942px;top:771px;width:44px;height:44px;background:#e3f2fd;box-sizing:border-box;border:2px solid #64b5f6;"></div>
<div class="c" style="left:337.8px;top:842.68px;width:97.1px;line-height:25.70px;">Jul 2017</div>
<div class="c" style="left:443.9px;top:842.68px;width:102.0px;line-height:25.70px;">Gujarat</div>
<div class="c" style="left:666.0px;top:842.68px;width:79.0px;line-height:25.70px;">Sales Invoice</div>
<div class="c" style="left:754.0px;top:842.68px;width:101.8px;line-height:25.70px;">EXP002</div>
<div class="c" style="left:864.8px;top:842.68px;width:80.1px;line-height:25.70px;">11-07-2017</div>
<div class="c" style="left:953.9px;top:842.68px;width:58.1px;line-height:25.70px;">Export</div>
<div class="c" style="left:1021.0px;top:842.68px;width:123.9px;line-height:25.70px;">Xeon Inc</div>
<div class="c" style="left:1375.8px;top:842.68px;width:102.2px;line-height:25.70px;"><svg class="rp" viewBox="0 0 13 17"><use href="#rup"/></svg> 2,00,000.00</div>
<div class="c" style="left:1753.0px;top:842.68px;width:102.0px;line-height:25.70px;"><svg class="rp" viewBox="0 0 13 17"><use href="#rup"/></svg> 2,00,000.00</div>
<div class="b" style="left:1872px;top:831px;width:44px;height:44px;background:#e3f2fd;box-sizing:border-box;border:2px solid #64b5f6;"></div>
<div class="b" style="left:1942px;top:831px;width:44px;height:44px;background:#e3f2fd;box-sizing:border-box;border:2px solid #64b5f6;"></div>
<div class="c" style="left:337.8px;top:902.68px;width:97.1px;line-height:25.70px;">Jul 2017</div>
<div class="c" style="left:443.9px;top:902.68px;width:102.0px;line-height:25.70px;">Gujarat</div>
<div class="c" style="left:666.0px;top:902.68px;width:79.0px;line-height:25.70px;">Sales Invoice</div>
<div class="c" style="left:754.0px;top:902.68px;width:101.8px;line-height:25.70px;">EXP001</div>
<div class="c" style="left:864.8px;top:902.68px;width:80.1px;line-height:25.70px;">10-07-2017</div>
<div class="c" style="left:953.9px;top:902.68px;width:58.1px;line-height:25.70px;">Export</div>
<div class="c" style="left:1021.0px;top:902.68px;width:123.9px;line-height:25.70px;">Xeon Inc</div>
<div class="c" style="left:1375.8px;top:902.68px;width:102.2px;line-height:25.70px;"><svg class="rp" viewBox="0 0 13 17"><use href="#rup"/></svg> 1,69,491.53</div>
<div class="c" style="left:1487.0px;top:902.68px;width:56.9px;line-height:25.70px;"><svg class="rp" viewBox="0 0 13 17"><use href="#rup"/></svg> 30,508.47</div>
<div class="c" style="left:1753.0px;top:902.68px;width:102.0px;line-height:25.70px;"><svg class="rp" viewBox="0 0 13 17"><use href="#rup"/></svg> 2,00,000.00</div>
<div class="b" style="left:1872px;top:891px;width:44px;height:44px;background:#e3f2fd;box-sizing:border-box;border:2px solid #64b5f6;"></div>
<div class="b" style="left:1942px;top:891px;width:44px;height:44px;background:#e3f2fd;box-sizing:border-box;border:2px solid #64b5f6;"></div>
<div class="c" style="left:337.8px;top:962.68px;width:97.1px;line-height:25.70px;">Jul 2017</div>
<div class="c" style="left:443.9px;top:962.68px;width:102.0px;line-height:25.70px;">Gujarat</div>
<div class="c" style="left:666.0px;top:962.68px;width:79.0px;line-height:25.70px;">Sales Invoice</div>
<div class="c" style="left:754.0px;top:962.68px;width:101.8px;line-height:25.70px;">INV005</div>
<div class="c" style="left:864.8px;top:962.68px;width:80.1px;line-height:25.70px;">08-07-2017</div>
<div class="c" style="left:953.9px;top:962.68px;width:58.1px;line-height:25.70px;">B2CS</div>
<div class="c" style="left:1021.0px;top:962.68px;width:123.9px;line-height:25.70px;">One Dollar Café</div>
<div class="c" style="left:1264.8px;top:962.68px;width:102.0px;line-height:25.70px;">Punjab</div>
<div class="c" style="left:1375.8px;top:962.68px;width:102.2px;line-height:25.70px;"><svg class="rp" viewBox="0 0 13 17"><use href="#rup"/></svg> 9,821.43</div>
<div class="c" style="left:1487.0px;top:962.68px;width:56.9px;line-height:25.70px;"><svg class="rp" viewBox="0 0 13 17"><use href="#rup"/></svg> 1,178.57</div>
<div class="c" style="left:1753.0px;top:962.68px;width:102.0px;line-height:25.70px;"><svg class="rp" viewBox="0 0 13 17"><use href="#rup"/></svg> 11,000.00</div>
<div class="b" style="left:1872px;top:951px;width:44px;height:44px;background:#e3f2fd;box-sizing:border-box;border:2px solid #64b5f6;"></div>
<div class="b" style="left:1942px;top:951px;width:44px;height:44px;background:#e3f2fd;box-sizing:border-box;border:2px solid #64b5f6;"></div>
<div class="c" style="left:337.8px;top:1022.68px;width:97.1px;line-height:25.70px;">Jul 2017</div>
<div class="c" style="left:443.9px;top:1022.68px;width:102.0px;line-height:25.70px;">Gujarat</div>
<div class="c" style="left:666.0px;top:1022.68px;width:79.0px;line-height:25.70px;">Sales Invoice</div>
<div class="c" style="left:754.0px;top:1022.68px;width:101.8px;line-height:25.70px;">INV004</div>
<div class="c" style="left:864.8px;top:1022.68px;width:80.1px;line-height:25.70px;">08-07-2017</div>
<div class="c" style="left:953.9px;top:1022.68px;width:58.1px;line-height:25.70px;">B2CL</div>
<div class="c" style="left:1021.0px;top:1022.68px;width:123.9px;line-height:25.70px;">Mars Communications</div>
<div class="c" style="left:1264.8px;top:1022.68px;width:102.0px;line-height:25.70px;">Delhi</div>
<div class="c" style="left:1375.8px;top:1022.68px;width:102.2px;line-height:25.70px;"><svg class="rp" viewBox="0 0 13 17"><use href="#rup"/></svg> 2,67,857.14</div>
<div class="c" style="left:1487.0px;top:1022.68px;width:56.9px;line-height:25.70px;"><svg class="rp" viewBox="0 0 13 17"><use href="#rup"/></svg> 32,142.86</div>
<div class="c" style="left:1753.0px;top:1022.68px;width:102.0px;line-height:25.70px;"><svg class="rp" viewBox="0 0 13 17"><use href="#rup"/></svg> 3,00,000.00</div>
<div class="b" style="left:1872px;top:1011px;width:44px;height:44px;background:#e3f2fd;box-sizing:border-box;border:2px solid #64b5f6;"></div>
<div class="b" style="left:1942px;top:1011px;width:44px;height:44px;background:#e3f2fd;box-sizing:border-box;border:2px solid #64b5f6;"></div>
<div class="c" style="left:337.8px;top:1082.68px;width:97.1px;line-height:25.70px;">Jul 2017</div>
<div class="c" style="left:443.9px;top:1082.68px;width:102.0px;line-height:25.70px;">Gujarat</div>
<div class="c" style="left:666.0px;top:1082.68px;width:79.0px;line-height:25.70px;">Sales Invoice</div>
<div class="c" style="left:754.0px;top:1082.68px;width:101.8px;line-height:25.70px;">INV003</div>
<div class="c" style="left:864.8px;top:1082.68px;width:80.1px;line-height:25.70px;">07-07-2017</div>
<div class="c" style="left:953.9px;top:1082.68px;width:58.1px;line-height:25.70px;">B2CS</div>
<div class="c" style="left:1021.0px;top:1082.68px;width:123.9px;line-height:25.70px;">Venus Enterprises</div>
<div class="c" style="left:1264.8px;top:1082.68px;width:102.0px;line-height:25.70px;">Gujarat</div>
<div class="c" style="left:1375.8px;top:1082.68px;width:102.2px;line-height:25.70px;"><svg class="rp" viewBox="0 0 13 17"><use href="#rup"/></svg> 75,000.00</div>
<div class="c" style="left:1552.9px;top:1082.68px;width:58.0px;line-height:25.70px;"><svg class="rp" viewBox="0 0 13 17"><use href="#rup"/></svg> 4,500.00</div>
<div class="c" style="left:1619.9px;top:1082.68px;width:57.0px;line-height:25.70px;"><svg class="rp" viewBox="0 0 13 17"><use href="#rup"/></svg> 4,500.00</div>
<div class="c" style="left:1753.0px;top:1082.68px;width:102.0px;line-height:25.70px;"><svg class="rp" viewBox="0 0 13 17"><use href="#rup"/></svg> 84,000.00</div>
<div class="b" style="left:1872px;top:1071px;width:44px;height:44px;background:#e3f2fd;box-sizing:border-box;border:2px solid #64b5f6;"></div>
<div class="b" style="left:1942px;top:1071px;width:44px;height:44px;background:#e3f2fd;box-sizing:border-box;border:2px solid #64b5f6;"></div>
<div class="c" style="left:337.8px;top:1142.68px;width:97.1px;line-height:25.70px;">Jul 2017</div>
<div class="c" style="left:443.9px;top:1142.68px;width:102.0px;line-height:25.70px;">Gujarat</div>
<div class="c" style="left:666.0px;top:1142.68px;width:79.0px;line-height:25.70px;">Sales Invoice</div>
<div class="c" style="left:754.0px;top:1142.68px;width:101.8px;line-height:25.70px;">INV002</div>
<div class="c" style="left:864.8px;top:1142.68px;width:80.1px;line-height:25.70px;">04-07-2017</div>
<div class="c" style="left:953.9px;top:1142.68px;width:58.1px;line-height:25.70px;">B2B</div>
<div class="c" style="left:1021.0px;top:1142.68px;width:123.9px;line-height:25.70px;">Sigma Marketing</div>
<div class="c" style="left:1153.9px;top:1142.68px;width:101.8px;line-height:25.70px;">24DELCM1234A1Z1</div>
<div class="c" style="left:1264.8px;top:1142.68px;width:102.0px;line-height:25.70px;">Gujarat</div>
<div class="c" style="left:1375.8px;top:1142.68px;width:102.2px;line-height:25.70px;"><svg class="rp" viewBox="0 0 13 17"><use href="#rup"/></svg> 99,831.79</div>
<div class="c" style="left:1552.9px;top:1142.68px;width:58.0px;line-height:25.70px;"><svg class="rp" viewBox="0 0 13 17"><use href="#rup"/></svg> 10,084.03</div>
<div class="c" style="left:1619.9px;top:1142.68px;width:57.0px;line-height:25.70px;"><svg class="rp" viewBox="0 0 13 17"><use href="#rup"/></svg> 10,084.03</div>
<div class="c" style="left:1685.9px;top:1142.68px;width:58.1px;line-height:25.70px;"><svg class="rp" viewBox="0 0 13 17"><use href="#rup"/></svg> 5,070.00</div>
<div class="c" style="left:1753.0px;top:1142.68px;width:102.0px;line-height:25.70px;"><svg class="rp" viewBox="0 0 13 17"><use href="#rup"/></svg> 1,25,000.00</div>
<div class="b" style="left:1872px;top:1131px;width:44px;height:44px;background:#e3f2fd;box-sizing:border-box;border:2px solid #64b5f6;"></div>
<div class="b" style="left:1942px;top:1131px;width:44px;height:44px;background:#e3f2fd;box-sizing:border-box;border:2px solid #64b5f6;"></div>
<div class="c" style="left:337.8px;top:1202.68px;width:97.1px;line-height:25.70px;">Jul 2017</div>
<div class="c" style="left:443.9px;top:1202.68px;width:102.0px;line-height:25.70px;">Gujarat</div>
<div class="c" style="left:666.0px;top:1202.68px;width:79.0px;line-height:25.70px;">Sales Invoice</div>
<div class="c" style="left:754.0px;top:1202.68px;width:101.8px;line-height:25.70px;">INV001</div>
<div class="c" style="left:864.8px;top:1202.68px;width:80.1px;line-height:25.70px;">03-07-2017</div>
<div class="c" style="left:953.9px;top:1202.68px;width:58.1px;line-height:25.70px;">B2B</div>
<div class="c" style="left:1021.0px;top:1202.68px;width:123.9px;line-height:25.70px;">Indigo World</div>
<div class="c" style="left:1153.9px;top:1202.68px;width:101.8px;line-height:25.70px;">09YELCM5678A1Z1</div>
<div class="c" style="left:1264.8px;top:1202.68px;width:102.0px;line-height:25.70px;">Uttar Pradesh</div>
<div class="c" style="left:1375.8px;top:1202.68px;width:102.2px;line-height:25.70px;"><svg class="rp" viewBox="0 0 13 17"><use href="#rup"/></svg> 1,63,975.00</div>
<div class="c" style="left:1487.0px;top:1202.68px;width:56.9px;line-height:25.70px;"><svg class="rp" viewBox="0 0 13 17"><use href="#rup"/></svg> 41,512.00</div>
<div class="c" style="left:1685.9px;top:1202.68px;width:58.1px;line-height:25.70px;"><svg class="rp" viewBox="0 0 13 17"><use href="#rup"/></svg> 14,437.00</div>
<div class="c" style="left:1753.0px;top:1202.68px;width:102.0px;line-height:25.70px;"><svg class="rp" viewBox="0 0 13 17"><use href="#rup"/></svg> 2,20,000.00</div>
<div class="b" style="left:1872px;top:1191px;width:44px;height:44px;background:#e3f2fd;box-sizing:border-box;border:2px solid #64b5f6;"></div>
<div class="b" style="left:1942px;top:1191px;width:44px;height:44px;background:#e3f2fd;box-sizing:border-box;border:2px solid #64b5f6;"></div>
<div class="c" style="left:337.8px;top:1262.68px;width:97.1px;line-height:25.70px;">Jul 2017</div>
<div class="c" style="left:443.9px;top:1262.68px;width:102.0px;line-height:25.70px;">Gujarat</div>
<div class="c" style="left:666.0px;top:1262.68px;width:79.0px;line-height:25.70px;">Advance Receipt</div>
<div class="c" style="left:754.0px;top:1262.68px;width:101.8px;line-height:25.70px;">ADV007</div>
<div class="c" style="left:864.8px;top:1262.68px;width:80.1px;line-height:25.70px;">18-07-2017</div>
<div class="c" style="left:953.9px;top:1262.68px;width:58.1px;line-height:25.70px;">B2B</div>
<div class="c" style="left:1021.0px;top:1262.68px;width:123.9px;line-height:25.70px;">Sigma Marketing</div>
<div class="c" style="left:1153.9px;top:1262.68px;width:101.8px;line-height:25.70px;">24DELCM1234A1Z1</div>
<div class="c" style="left:1264.8px;top:1262.68px;width:102.0px;line-height:25.70px;">Gujarat</div>
<div class="c" style="left:1375.8px;top:1262.68px;width:102.2px;line-height:25.70px;"><svg class="rp" viewBox="0 0 13 17"><use href="#rup"/></svg> 1,904.76</div>
<div class="c" style="left:1552.9px;top:1262.68px;width:58.0px;line-height:25.70px;"><svg class="rp" viewBox="0 0 13 17"><use href="#rup"/></svg> 47.62</div>
<div class="c" style="left:1619.9px;top:1262.68px;width:57.0px;line-height:25.70px;"><svg class="rp" viewBox="0 0 13 17"><use href="#rup"/></svg> 47.62</div>
<div class="c" style="left:1753.0px;top:1262.68px;width:102.0px;line-height:25.70px;"><svg class="rp" viewBox="0 0 13 17"><use href="#rup"/></svg> 2,000.00</div>
<div class="b" style="left:1872px;top:1251px;width:44px;height:44px;background:#e3f2fd;box-sizing:border-box;border:2px solid #64b5f6;"></div>
<div class="b" style="left:1942px;top:1251px;width:44px;height:44px;background:#e3f2fd;box-sizing:border-box;border:2px solid #64b5f6;"></div>
<div class="c" style="left:337.8px;top:1322.68px;width:97.1px;line-height:25.70px;">Jul 2017</div>
<div class="c" style="left:443.9px;top:1322.68px;width:102.0px;line-height:25.70px;">Gujarat</div>
<div class="c" style="left:666.0px;top:1322.68px;width:79.0px;line-height:25.70px;">Advance Receipt</div>
<div class="c" style="left:754.0px;top:1322.68px;width:101.8px;line-height:25.70px;">ADV006</div>
<div class="c" style="left:864.8px;top:1322.68px;width:80.1px;line-height:25.70px;">14-07-2017</div>
<div class="c" style="left:953.9px;top:1322.68px;width:58.1px;line-height:25.70px;">B2B</div>
<div class="c" style="left:1021.0px;top:1322.68px;width:123.9px;line-height:25.70px;">Indigo World</div>
<div class="c" style="left:1153.9px;top:1322.68px;width:101.8px;line-height:25.70px;">09YELCM5678A1Z1</div>
<div class="c" style="left:1264.8px;top:1322.68px;width:102.0px;line-height:25.70px;">Uttar Pradesh</div>
<div class="c" style="left:1375.8px;top:1322.68px;width:102.2px;line-height:25.70px;"><svg class="rp" viewBox="0 0 13 17"><use href="#rup"/></svg> 3,623.19</div>
<div class="c" style="left:1487.0px;top:1322.68px;width:56.9px;line-height:25.70px;"><svg class="rp" viewBox="0 0 13 17"><use href="#rup"/></svg> 1,014.49</div>
<div class="c" style="left:1685.9px;top:1322.68px;width:58.1px;line-height:25.70px;"><svg class="rp" viewBox="0 0 13 17"><use href="#rup"/></svg> 362.32</div>
<div class="c" style="left:1753.0px;top:1322.68px;width:102.0px;line-height:25.70px;"><svg class="rp" viewBox="0 0 13 17"><use href="#rup"/></svg> 5,000.00</div>
<div class="b" style="left:1872px;top:1311px;width:44px;height:44px;background:#e3f2fd;box-sizing:border-box;border:2px solid #64b5f6;"></div>
<div class="b" style="left:1942px;top:1311px;width:44px;height:44px;background:#e3f2fd;box-sizing:border-box;border:2px solid #64b5f6;"></div>
<div class="c" style="left:337.8px;top:1382.68px;width:97.1px;line-height:25.70px;">Jul 2017</div>
<div class="c" style="left:443.9px;top:1382.68px;width:102.0px;line-height:25.70px;">Gujarat</div>
<div class="c" style="left:666.0px;top:1382.68px;width:79.0px;line-height:25.70px;">Advance Receipt</div>
<div class="c" style="left:754.0px;top:1382.68px;width:101.8px;line-height:25.70px;">ADV005</div>
<div class="c" style="left:864.8px;top:1382.68px;width:80.1px;line-height:25.70px;">12-07-2017</div>
<div class="c" style="left:953.9px;top:1382.68px;width:58.1px;line-height:25.70px;">B2CS</div>
<div class="c" style="left:1021.0px;top:1382.68px;width:123.9px;line-height:25.70px;">One Dollar Café</div>
<div class="c" style="left:1264.8px;top:1382.68px;width:102.0px;line-height:25.70px;">Punjab</div>
<div class="c" style="left:1375.8px;top:1382.68px;width:102.2px;line-height:25.70px;"><svg class="rp" viewBox="0 0 13 17"><use href="#rup"/></svg> 2,47,619.05</div>
<div class="c" style="left:1487.0px;top:1382.68px;width:56.9px;line-height:25.70px;"><svg class="rp" viewBox="0 0 13 17"><use href="#rup"/></svg> 12,380.95</div>
<div class="c" style="left:1753.0px;top:1382.68px;width:102.0px;line-height:25.70px;"><svg class="rp" viewBox="0 0 13 17"><use href="#rup"/></svg> 2,60,000.00</div>
<div class="b" style="left:1872px;top:1371px;width:44px;height:44px;background:#e3f2fd;box-sizing:border-box;border:2px solid #64b5f6;"></div>
<div class="b" style="left:1942px;top:1371px;width:44px;height:44px;background:#e3f2fd;box-sizing:border-box;border:2px solid #64b5f6;"></div>
<div class="c" style="left:337.8px;top:1442.68px;width:97.1px;line-height:25.70px;">Jul 2017</div>
<div class="c" style="left:443.9px;top:1442.68px;width:102.0px;line-height:25.70px;">Gujarat</div>
<div class="c" style="left:666.0px;top:1442.68px;width:79.0px;line-height:25.70px;">Advance Receipt</div>
<div class="c" style="left:754.0px;top:1442.68px;width:101.8px;line-height:25.70px;">ADV004</div>
<div class="c" style="left:864.8px;top:1442.68px;width:80.1px;line-height:25.70px;">10-07-2017</div>
<div class="c" style="left:953.9px;top:1442.68px;width:58.1px;line-height:25.70px;">B2B</div>
<div class="c" style="left:1021.0px;top:1442.68px;width:123.9px;line-height:25.70px;">Sigma Marketing</div>
<div class="c" style="left:1153.9px;top:1442.68px;width:101.8px;line-height:25.70px;">24DELCM1234A1Z1</div>
<div class="c" style="left:1264.8px;top:1442.68px;width:102.0px;line-height:25.70px;">Gujarat</div>
<div class="c" style="left:1375.8px;top:1442.68px;width:102.2px;line-height:25.70px;"><svg class="rp" viewBox="0 0 13 17"><use href="#rup"/></svg> 4,416.84</div>
<div class="c" style="left:1552.9px;top:1442.68px;width:58.0px;line-height:25.70px;"><svg class="rp" viewBox="0 0 13 17"><use href="#rup"/></svg> 110.42</div>
<div class="c" style="left:1619.9px;top:1442.68px;width:57.0px;line-height:25.70px;"><svg class="rp" viewBox="0 0 13 17"><use href="#rup"/></svg> 110.42</div>
<div class="c" style="left:1685.9px;top:1442.68px;width:58.1px;line-height:25.70px;"><svg class="rp" viewBox="0 0 13 17"><use href="#rup"/></svg> 362.32</div>
<div class="c" style="left:1753.0px;top:1442.68px;width:102.0px;line-height:25.70px;"><svg class="rp" viewBox="0 0 13 17"><use href="#rup"/></svg> 5,000.00</div>
<div class="b" style="left:1872px;top:1431px;width:44px;height:44px;background:#e3f2fd;box-sizing:border-box;border:2px solid #64b5f6;"></div>
<div class="b" style="left:1942px;top:1431px;width:44px;height:44px;background:#e3f2fd;box-sizing:border-box;border:2px solid #64b5f6;"></div>
<div class="b" style="left:312px;top:1480px;width:1724px;height:2px;background:#d2d2d2;"></div>
<div class="b" style="left:1998px;top:176px;width:36px;height:48px;background:#ffffff;"></div>
<div class="b" style="left:2000px;top:224px;width:34px;height:1256px;background:#f0f0f0;"></div>
<div class="b" style="left:2000px;top:258px;width:34px;height:642px;background:#cdcdcd;"></div>
<div class="b" style="left:592px;top:1492px;width:2px;height:32px;background:#d0d0d0;"></div>
<div class="b" style="left:736px;top:1492px;width:2px;height:32px;background:#d0d0d0;"></div>
<div class="b" style="left:1093px;top:1492px;width:2px;height:32px;background:#d0d0d0;"></div>
<div class="b" style="left:1343px;top:1492px;width:2px;height:32px;background:#d0d0d0;"></div>
<div class="b" style="left:1582px;top:1492px;width:2px;height:32px;background:#d0d0d0;"></div>
<div class="b" style="left:1821px;top:1492px;width:2px;height:32px;background:#d0d0d0;"></div>
<div class="t " style="left:609.5px;top:1492.14px;font-size:31px;line-height:34.63px;color:#000;font-weight:normal;transform:scaleX(1.15);transform-origin:0 28px;">#</div>
<div class="t " style="left:634.0px;top:1498.48px;font-size:22px;line-height:24.58px;color:#000;transform:scaleY(1.1);transform-origin:0 19.92px;">Docs</div>
<div class="t" style="right:1327.0px;top:1498.48px;font-size:22px;line-height:24.58px;transform:scaleY(1.1);transform-origin:0 19.92px;">37</div>
<div class="t " style="left:754.5px;top:1495.77px;font-size:25px;line-height:27.93px;color:#000;transform:scaleY(1.05);transform-origin:0 22.63px;">Σ</div>
<div class="t " style="left:771.5px;top:1498.48px;font-size:22px;line-height:24.58px;color:#000;transform:scaleY(1.1);transform-origin:0 19.92px;">Taxable Value</div>
<div class="t" style="right:971.0px;top:1498.48px;font-size:22px;line-height:24.58px;color:#000;transform:scaleY(1.1);transform-origin:0 19.92px;"><svg class="rp" viewBox="0 0 13 17"><use href="#rup"/></svg> 22,75,585.76</div>
<div class="t " style="left:1111.0px;top:1495.77px;font-size:25px;line-height:27.93px;color:#000;transform:scaleY(1.05);transform-origin:0 22.63px;">Σ</div>
<div class="t " style="left:1128.0px;top:1498.48px;font-size:22px;line-height:24.58px;color:#000;transform:scaleY(1.1);transform-origin:0 19.92px;">IGST</div>
<div class="t" style="right:723.0px;top:1498.48px;font-size:22px;line-height:24.58px;color:#000;transform:scaleY(1.1);transform-origin:0 19.92px;"><svg class="rp" viewBox="0 0 13 17"><use href="#rup"/></svg> 2,67,350.41</div>
<div class="t " style="left:1360.5px;top:1495.77px;font-size:25px;line-height:27.93px;color:#000;transform:scaleY(1.05);transform-origin:0 22.63px;">Σ</div>
<div class="t " style="left:1377.5px;top:1498.48px;font-size:22px;line-height:24.58px;color:#000;transform:scaleY(1.1);transform-origin:0 19.92px;">CGST</div>
<div class="t" style="right:484.0px;top:1498.48px;font-size:22px;line-height:24.58px;color:#000;transform:scaleY(1.1);transform-origin:0 19.92px;"><svg class="rp" viewBox="0 0 13 17"><use href="#rup"/></svg> 19,249.31</div>
<div class="t " style="left:1600.5px;top:1495.77px;font-size:25px;line-height:27.93px;color:#000;transform:scaleY(1.05);transform-origin:0 22.63px;">Σ</div>
<div class="t " style="left:1617.5px;top:1498.48px;font-size:22px;line-height:24.58px;color:#000;transform:scaleY(1.1);transform-origin:0 19.92px;">SGST</div>
<div class="t" style="right:246.0px;top:1498.48px;font-size:22px;line-height:24.58px;color:#000;transform:scaleY(1.1);transform-origin:0 19.92px;"><svg class="rp" viewBox="0 0 13 17"><use href="#rup"/></svg> 19,249.31</div>
<div class="t " style="left:1838.5px;top:1495.77px;font-size:25px;line-height:27.93px;color:#000;transform:scaleY(1.05);transform-origin:0 22.63px;">Σ</div>
<div class="t " style="left:1855.5px;top:1498.48px;font-size:22px;line-height:24.58px;color:#000;transform:scaleY(1.1);transform-origin:0 19.92px;">Cess</div>
<div class="t" style="right:14.0px;top:1498.48px;font-size:22px;line-height:24.58px;color:#000;transform:scaleY(1.1);transform-origin:0 19.92px;"><svg class="rp" viewBox="0 0 13 17"><use href="#rup"/></svg> 44,565.21</div>
<div class="b" style="left:0px;top:0px;width:2048px;height:2px;background:#1a7fd6;"></div>
<div class="b" style="left:0px;top:0px;width:2px;height:1536px;background:#1a7fd6;"></div>
<div class="b" style="left:2046px;top:0px;width:2px;height:1536px;background:#1a7fd6;"></div>
<div class="b" style="left:0px;top:1533px;width:2048px;height:3px;background:#1a7fd6;"></div>
<svg class="ov" width="2048" height="1536" viewBox="0 0 2048 1536">
<defs><symbol id="rup" viewBox="0 0 13 17"><path d="M0.6,1.1H12.2M0.6,5.3H12.2M0.8,1.1H4.2C7.6,1.1 9.2,2.9 9.2,5.2C9.2,7.6 7.4,9.3 4.2,9.3H1.2L10.4,16.6" fill="none" stroke="#000" stroke-width="2.1"/></symbol>
<filter id="sh" x="-5%" y="-5%" width="110%" height="110%"><feDropShadow dx="1" dy="1.5" stdDeviation="1.2" flood-color="#000" flood-opacity="0.35"/></filter></defs>
<path d="M74,33.3 L94.4,17.7 L102,23.6 V20 H107.7 V28.1 L114,33 V38.6 L94.4,23.2 L74,38.7Z" fill="#fff"/>
<path d="M79,39.4 L94.4,28.2 L109,39.4 V56.8 H97 V44.5 H91 V56.8 H79Z" fill="#fff"/>
<g fill="none" stroke="#444" stroke-width="3.3"><path d="M1787.29,29.77 A15.3,15.3 0 0 1 1814.88,30.97"/><path d="M1786.82,43.17 A15.3,15.3 0 0 0 1815.35,41.68"/></g>
<path d="M1782.1,26.3 L1784,36.5 L1793.4,32.4Z" fill="#444"/>
<path d="M1808.6,40.9 L1817.5,37 L1819.9,46.9Z" fill="#444"/>
<rect x="1860" y="35" width="22" height="4.4" fill="#444"/>
<rect x="1930" y="27" width="21" height="20.5" fill="none" stroke="#444" stroke-width="2"/>
<path d="M2001,27 L2021.5,47.5 M2021.5,27 L2001,47.5" stroke="#444" stroke-width="2.1"/>
<g transform="translate(0,0)"><path d="M38,133.1 L56.9,130.2 V159.8 L38,157.1Z" fill="#606060"/><path fill="#fff" fill-rule="evenodd" d="M41.9,151 L45.2,139.3 H48.3 L51.6,151 H49 L48.2,148.2 H45.3 L44.5,151Z M45.9,145.9 H47.6 L46.75,142.4Z"/>
<clipPath id="gc"><rect x="58.3" y="120" width="20" height="50"/></clipPath>
<path d="M66.95,146.40 L69.07,148.16 L67.30,151.97 L64.59,151.47 L63.81,152.18 L64.07,154.93 L60.12,156.36 L58.55,154.10 L57.50,154.05 L55.74,156.17 L51.93,154.40 L52.43,151.69 L51.72,150.91 L48.97,151.17 L47.54,147.22 L49.80,145.65 L49.85,144.60 L47.73,142.84 L49.50,139.03 L52.21,139.53 L52.99,138.82 L52.73,136.07 L56.68,134.64 L58.25,136.90 L59.30,136.95 L61.06,134.83 L64.87,136.60 L64.37,139.31 L65.08,140.09 L67.83,139.83 L69.26,143.78 L67.00,145.35Z M63.9,145.5 A5.5,5.5 0 1 0 52.9,145.5 A5.5,5.5 0 1 0 63.9,145.5Z" fill="#606060" fill-rule="evenodd" clip-path="url(#gc)"/><path d="M58.3,144.1 L60.7,145.5 L58.3,146.9Z" fill="#606060"/></g>
<g fill="none" stroke="#606060" stroke-width="1.7"><ellipse cx="54" cy="193.3" rx="6.3" ry="7.8"/><path d="M48.4,203 Q54,206.7 59.6,203 C64,205.2 66,209.5 66.1,214 Q54,218.3 41.9,214 C42,209.5 44,205.2 48.4,203Z"/></g>
<g fill="none" stroke="#606060" stroke-width="1.7" stroke-linejoin="round"><path d="M41.9,250 L53,245 L65,250 L53,254.9Z"/><path d="M41.9,250 V264.2 L53,269.2 V254.9"/><path d="M53,269.2 L65.3,264.2 V259.5"/><path d="M65,250 L69.4,257.5 L57.3,263 L53.5,255.5"/><path d="M41.9,250 L38.6,256.3"/></g>
<rect x="38.9" y="301.8" width="30.2" height="22.4" rx="2.3" fill="none" stroke="#606060" stroke-width="1.7"/>
<g stroke="#606060" stroke-width="1.8" stroke-linecap="round"><path d="M43,304.8 V321.3"/><path d="M46,304.8 V321.3"/><path d="M50,304.8 V321.3"/><path d="M55,304.8 V321.3"/><path d="M58,304.8 V321.3"/><path d="M62,304.8 V321.3"/><path d="M65,304.8 V321.3"/></g>
<g transform="translate(0,-156)" fill="none" stroke="#1976d2" stroke-width="1.7" stroke-linejoin="round"><path d="M42.4,581 V554.6 Q42.4,552.8 44.2,552.8 H64 Q65.8,552.8 65.8,554.6 V581 L62.6,583.2 L60.5,579.8 L58.3,583.2 L56.2,579.8 L54.1,583.2 L51.8,579.8 L49.5,583.2 L47.4,579.8 L45.3,583.2Z"/><path d="M47.3,558.5 H60.8 M47.3,563.6 H60.8 M47.3,568.4 H60.8" stroke-linecap="round"/></g>
<g transform="translate(0,-156)" fill="none" stroke="#606060" stroke-width="1.7" stroke-linejoin="round" stroke-linecap="round"><path d="M38.8,608.8 H42.2 L48.2,629.6 H67.8"/><path d="M43.7,613.7 H67.3 Q68.5,613.7 68.2,614.8 L65.5,625.7 H47.3"/><circle cx="52" cy="635.8" r="2.9"/><circle cx="62.9" cy="635.8" r="2.9"/></g>
<g transform="translate(0,0)" fill="none" stroke="#606060" stroke-width="1.7" stroke-linejoin="round"><path d="M42.4,581 V554.6 Q42.4,552.8 44.2,552.8 H64 Q65.8,552.8 65.8,554.6 V581 L62.6,583.2 L60.5,579.8 L58.3,583.2 L56.2,579.8 L54.1,583.2 L51.8,579.8 L49.5,583.2 L47.4,579.8 L45.3,583.2Z"/><path d="M47.3,558.5 H60.8 M47.3,563.6 H60.8 M47.3,568.4 H60.8" stroke-linecap="round"/></g>
<g transform="translate(0,0)" fill="none" stroke="#606060" stroke-width="1.7" stroke-linejoin="round" stroke-linecap="round"><path d="M38.8,608.8 H42.2 L48.2,629.6 H67.8"/><path d="M43.7,613.7 H67.3 Q68.5,613.7 68.2,614.8 L65.5,625.7 H47.3"/><circle cx="52" cy="635.8" r="2.9"/><circle cx="62.9" cy="635.8" r="2.9"/></g>
<g transform="translate(0,0)"><path d="M51.5,735.2 H38.8 V707.8 H61.3 V712.7" fill="none" stroke="#606060" stroke-width="2"/><path d="M43,713.5 H49.9 M43,717.6 H53.1 M43,721.3 H51.6 M43,725 H51.6 M43,728.6 H53.3" stroke="#606060" stroke-width="1.3"/><path d="M56,728.5 L52.8,736.8 L56.2,735 L58.3,738.6 L61.25,731 L64.3,738.6 L66.4,735 L69.8,736.8 L66.5,728.5Z" fill="#606060"/><path d="M69.85,722.80 L68.51,724.24 L69.20,726.09 L67.40,726.91 L67.33,728.88 L65.36,728.95 L64.54,730.75 L62.69,730.06 L61.25,731.40 L59.81,730.06 L57.96,730.75 L57.14,728.95 L55.17,728.88 L55.10,726.91 L53.30,726.09 L53.99,724.24 L52.65,722.80 L53.99,721.36 L53.30,719.51 L55.10,718.69 L55.17,716.72 L57.14,716.65 L57.96,714.85 L59.81,715.54 L61.25,714.20 L62.69,715.54 L64.54,714.85 L65.36,716.65 L67.33,716.72 L67.40,718.69 L69.20,719.51 L68.51,721.36Z M66.65,722.8 A5.4,5.4 0 1 0 55.85,722.8 A5.4,5.4 0 1 0 66.65,722.8Z" fill="#606060" fill-rule="evenodd"/></g>
<g transform="translate(0,56)"><path d="M51.5,735.2 H38.8 V707.8 H61.3 V712.7" fill="none" stroke="#606060" stroke-width="2"/><path d="M43,713.5 H49.9 M43,717.6 H53.1 M43,721.3 H51.6 M43,725 H51.6 M43,728.6 H53.3" stroke="#606060" stroke-width="1.3"/><path d="M56,728.5 L52.8,736.8 L56.2,735 L58.3,738.6 L61.25,731 L64.3,738.6 L66.4,735 L69.8,736.8 L66.5,728.5Z" fill="#606060"/><path d="M69.85,722.80 L68.51,724.24 L69.20,726.09 L67.40,726.91 L67.33,728.88 L65.36,728.95 L64.54,730.75 L62.69,730.06 L61.25,731.40 L59.81,730.06 L57.96,730.75 L57.14,728.95 L55.17,728.88 L55.10,726.91 L53.30,726.09 L53.99,724.24 L52.65,722.80 L53.99,721.36 L53.30,719.51 L55.10,718.69 L55.17,716.72 L57.14,716.65 L57.96,714.85 L59.81,715.54 L61.25,714.20 L62.69,715.54 L64.54,714.85 L65.36,716.65 L67.33,716.72 L67.40,718.69 L69.20,719.51 L68.51,721.36Z M66.65,722.8 A5.4,5.4 0 1 0 55.85,722.8 A5.4,5.4 0 1 0 66.65,722.8Z" fill="#606060" fill-rule="evenodd"/></g>
<g transform="translate(0,112)"><path d="M51.5,735.2 H38.8 V707.8 H61.3 V712.7" fill="none" stroke="#606060" stroke-width="2"/><path d="M43,713.5 H49.9 M43,717.6 H53.1 M43,721.3 H51.6 M43,725 H51.6 M43,728.6 H53.3" stroke="#606060" stroke-width="1.3"/><path d="M56,728.5 L52.8,736.8 L56.2,735 L58.3,738.6 L61.25,731 L64.3,738.6 L66.4,735 L69.8,736.8 L66.5,728.5Z" fill="#606060"/><path d="M69.85,722.80 L68.51,724.24 L69.20,726.09 L67.40,726.91 L67.33,728.88 L65.36,728.95 L64.54,730.75 L62.69,730.06 L61.25,731.40 L59.81,730.06 L57.96,730.75 L57.14,728.95 L55.17,728.88 L55.10,726.91 L53.30,726.09 L53.99,724.24 L52.65,722.80 L53.99,721.36 L53.30,719.51 L55.10,718.69 L55.17,716.72 L57.14,716.65 L57.96,714.85 L59.81,715.54 L61.25,714.20 L62.69,715.54 L64.54,714.85 L65.36,716.65 L67.33,716.72 L67.40,718.69 L69.20,719.51 L68.51,721.36Z M66.65,722.8 A5.4,5.4 0 1 0 55.85,722.8 A5.4,5.4 0 1 0 66.65,722.8Z" fill="#606060" fill-rule="evenodd"/></g>
<g transform="translate(0,168)"><path d="M51.5,735.2 H38.8 V707.8 H61.3 V712.7" fill="none" stroke="#606060" stroke-width="2"/><path d="M43,713.5 H49.9 M43,717.6 H53.1 M43,721.3 H51.6 M43,725 H51.6 M43,728.6 H53.3" stroke="#606060" stroke-width="1.3"/><path d="M56,728.5 L52.8,736.8 L56.2,735 L58.3,738.6 L61.25,731 L64.3,738.6 L66.4,735 L69.8,736.8 L66.5,728.5Z" fill="#606060"/><path d="M69.85,722.80 L68.51,724.24 L69.20,726.09 L67.40,726.91 L67.33,728.88 L65.36,728.95 L64.54,730.75 L62.69,730.06 L61.25,731.40 L59.81,730.06 L57.96,730.75 L57.14,728.95 L55.17,728.88 L55.10,726.91 L53.30,726.09 L53.99,724.24 L52.65,722.80 L53.99,721.36 L53.30,719.51 L55.10,718.69 L55.17,716.72 L57.14,716.65 L57.96,714.85 L59.81,715.54 L61.25,714.20 L62.69,715.54 L64.54,714.85 L65.36,716.65 L67.33,716.72 L67.40,718.69 L69.20,719.51 L68.51,721.36Z M66.65,722.8 A5.4,5.4 0 1 0 55.85,722.8 A5.4,5.4 0 1 0 66.65,722.8Z" fill="#606060" fill-rule="evenodd"/></g>
<g transform="translate(0,224)"><path d="M51.5,735.2 H38.8 V707.8 H61.3 V712.7" fill="none" stroke="#606060" stroke-width="2"/><path d="M43,713.5 H49.9 M43,717.6 H53.1 M43,721.3 H51.6 M43,725 H51.6 M43,728.6 H53.3" stroke="#606060" stroke-width="1.3"/><path d="M56,728.5 L52.8,736.8 L56.2,735 L58.3,738.6 L61.25,731 L64.3,738.6 L66.4,735 L69.8,736.8 L66.5,728.5Z" fill="#606060"/><path d="M69.85,722.80 L68.51,724.24 L69.20,726.09 L67.40,726.91 L67.33,728.88 L65.36,728.95 L64.54,730.75 L62.69,730.06 L61.25,731.40 L59.81,730.06 L57.96,730.75 L57.14,728.95 L55.17,728.88 L55.10,726.91 L53.30,726.09 L53.99,724.24 L52.65,722.80 L53.99,721.36 L53.30,719.51 L55.10,718.69 L55.17,716.72 L57.14,716.65 L57.96,714.85 L59.81,715.54 L61.25,714.20 L62.69,715.54 L64.54,714.85 L65.36,716.65 L67.33,716.72 L67.40,718.69 L69.20,719.51 L68.51,721.36Z M66.65,722.8 A5.4,5.4 0 1 0 55.85,722.8 A5.4,5.4 0 1 0 66.65,722.8Z" fill="#606060" fill-rule="evenodd"/></g>
<g transform="translate(0,280)"><path d="M51.5,735.2 H38.8 V707.8 H61.3 V712.7" fill="none" stroke="#606060" stroke-width="2"/><path d="M43,713.5 H49.9 M43,717.6 H53.1 M43,721.3 H51.6 M43,725 H51.6 M43,728.6 H53.3" stroke="#606060" stroke-width="1.3"/><path d="M56,728.5 L52.8,736.8 L56.2,735 L58.3,738.6 L61.25,731 L64.3,738.6 L66.4,735 L69.8,736.8 L66.5,728.5Z" fill="#606060"/><path d="M69.85,722.80 L68.51,724.24 L69.20,726.09 L67.40,726.91 L67.33,728.88 L65.36,728.95 L64.54,730.75 L62.69,730.06 L61.25,731.40 L59.81,730.06 L57.96,730.75 L57.14,728.95 L55.17,728.88 L55.10,726.91 L53.30,726.09 L53.99,724.24 L52.65,722.80 L53.99,721.36 L53.30,719.51 L55.10,718.69 L55.17,716.72 L57.14,716.65 L57.96,714.85 L59.81,715.54 L61.25,714.20 L62.69,715.54 L64.54,714.85 L65.36,716.65 L67.33,716.72 L67.40,718.69 L69.20,719.51 L68.51,721.36Z M66.65,722.8 A5.4,5.4 0 1 0 55.85,722.8 A5.4,5.4 0 1 0 66.65,722.8Z" fill="#606060" fill-rule="evenodd"/></g>
<g transform="translate(0,0)"><rect x="39" y="1045" width="30" height="28" fill="none" stroke="#606060" stroke-width="2"/><rect x="38" y="1044" width="32" height="5.8" fill="#606060"/><path d="M49.3,1049 V1073 M59,1049 V1073 M39,1057.6 H69 M39,1065 H69" stroke="#606060" stroke-width="2"/></g>
<rect x="39" y="1105.4" width="30" height="23" fill="none" stroke="#606060" stroke-width="2"/><path d="M39,1112 H69" stroke="#606060" stroke-width="2"/><path d="M44.5,1102 V1107 M63.3,1102 V1107" stroke="#606060" stroke-width="2.6" stroke-linecap="round"/>
<path d="M687.6,118.8 L692.6,123.9 L697.6,118.8" fill="none" stroke="#fff" stroke-width="2.8"/>
<path d="M764.4,124.1 H788.7 M776.7,112 V136" stroke="#fff" stroke-width="2.1"/>
<g fill="#fff"><rect x="942" y="108.7" width="5.1" height="10.6"/><path d="M938.8,118.8 H950.4 L944.6,125.2Z"/></g>
<path d="M932,121.6 L931,122.3 V129.8 L944.7,137.6 L958.6,129.6 V122.3 L957.4,121.6" fill="none" stroke="#fff" stroke-width="4" stroke-linejoin="miter"/>
<g fill="#fff"><rect x="1123.3" y="113" width="5.8" height="11.7"/><path d="M1119,113.6 H1133.6 L1126.4,106.2Z"/></g>
<path d="M1119.6,118.5 L1110.5,123.6 V130 L1126.7,139.6 L1142.8,130 V123.6 L1133.6,118.5" fill="none" stroke="#fff" stroke-width="4" stroke-linejoin="miter"/>
<g fill="none" stroke="#fff" stroke-width="2"><path d="M1294.4,112.2 H1318.2"/><path d="M1303.2,111.5 V110.2 Q1303.2,108.9 1304.6,108.9 H1308.2 Q1309.6,108.9 1309.6,110.2 V111.5"/><path d="M1296.2,113 V137.6 Q1296.2,139.6 1298.2,139.6 H1314 Q1316,139.6 1316,137.6 V113"/><path d="M1301.2,117 V134.6 M1306.1,117 V134.6 M1311.1,117 V134.6" stroke-width="1.8" stroke-linecap="round"/></g>
<circle cx="1502.8" cy="119" r="12" fill="none" stroke="#767676" stroke-width="2"/><path d="M1494.3,127.6 L1481,140.9" stroke="#767676" stroke-width="2.1"/>
<path d="M1822.4,119.2 L1836,132.6 L1849.6,119.2" fill="none" stroke="#000" stroke-width="2"/>
<clipPath id="gb"><rect x="314" y="224" width="1684" height="1256"/></clipPath><g clip-path="url(#gb)">
<g transform="translate(1892.6,253.4) rotate(31)" fill="#000"><rect x="-3.9" y="-14.8" width="7.8" height="3.6" rx="1.6"/><rect x="-3.9" y="-9.4" width="7.8" height="14.4"/><path d="M-3.9,6.6 H3.9 L-0.3,14.6Z"/></g>
<g transform="translate(1942,231)"><rect x="9" y="14.3" width="26" height="15.3" rx="3" fill="#000"/><rect x="15.2" y="9.6" width="13.8" height="10.6" fill="#e3f2fd" stroke="#000" stroke-width="1.3"/><rect x="14.6" y="25.6" width="14.8" height="8.8" fill="#e3f2fd" stroke="#000" stroke-width="1.3"/><path d="M18,27.9 H26 M18,31 H26" stroke="#555" stroke-width="1.2"/><circle cx="12" cy="26.8" r="0.8" fill="#e3f2fd"/><circle cx="32" cy="26.8" r="0.8" fill="#e3f2fd"/></g>
<g transform="translate(1892.6,313.4) rotate(31)" fill="#000"><rect x="-3.9" y="-14.8" width="7.8" height="3.6" rx="1.6"/><rect x="-3.9" y="-9.4" width="7.8" height="14.4"/><path d="M-3.9,6.6 H3.9 L-0.3,14.6Z"/></g>
<g transform="translate(1942,291)"><rect x="9" y="14.3" width="26" height="15.3" rx="3" fill="#000"/><rect x="15.2" y="9.6" width="13.8" height="10.6" fill="#e3f2fd" stroke="#000" stroke-width="1.3"/><rect x="14.6" y="25.6" width="14.8" height="8.8" fill="#e3f2fd" stroke="#000" stroke-width="1.3"/><path d="M18,27.9 H26 M18,31 H26" stroke="#555" stroke-width="1.2"/><circle cx="12" cy="26.8" r="0.8" fill="#e3f2fd"/><circle cx="32" cy="26.8" r="0.8" fill="#e3f2fd"/></g>
<g transform="translate(1892.6,373.4) rotate(31)" fill="#000"><rect x="-3.9" y="-14.8" width="7.8" height="3.6" rx="1.6"/><rect x="-3.9" y="-9.4" width="7.8" height="14.4"/><path d="M-3.9,6.6 H3.9 L-0.3,14.6Z"/></g>
<g transform="translate(1942,351)"><rect x="9" y="14.3" width="26" height="15.3" rx="3" fill="#000"/><rect x="15.2" y="9.6" width="13.8" height="10.6" fill="#e3f2fd" stroke="#000" stroke-width="1.3"/><rect x="14.6" y="25.6" width="14.8" height="8.8" fill="#e3f2fd" stroke="#000" stroke-width="1.3"/><path d="M18,27.9 H26 M18,31 H26" stroke="#555" stroke-width="1.2"/><circle cx="12" cy="26.8" r="0.8" fill="#e3f2fd"/><circle cx="32" cy="26.8" r="0.8" fill="#e3f2fd"/></g>
<g transform="translate(1892.6,433.4) rotate(31)" fill="#000"><rect x="-3.9" y="-14.8" width="7.8" height="3.6" rx="1.6"/><rect x="-3.9" y="-9.4" width="7.8" height="14.4"/><path d="M-3.9,6.6 H3.9 L-0.3,14.6Z"/></g>
<g transform="translate(1942,411)"><rect x="9" y="14.3" width="26" height="15.3" rx="3" fill="#000"/><rect x="15.2" y="9.6" width="13.8" height="10.6" fill="#e3f2fd" stroke="#000" stroke-width="1.3"/><rect x="14.6" y="25.6" width="14.8" height="8.8" fill="#e3f2fd" stroke="#000" stroke-width="1.3"/><path d="M18,27.9 H26 M18,31 H26" stroke="#555" stroke-width="1.2"/><circle cx="12" cy="26.8" r="0.8" fill="#e3f2fd"/><circle cx="32" cy="26.8" r="0.8" fill="#e3f2fd"/></g>
<g transform="translate(1892.6,493.4) rotate(31)" fill="#000"><rect x="-3.9" y="-14.8" width="7.8" height="3.6" rx="1.6"/><rect x="-3.9" y="-9.4" width="7.8" height="14.4"/><path d="M-3.9,6.6 H3.9 L-0.3,14.6Z"/></g>
<g transform="translate(1942,471)"><rect x="9" y="14.3" width="26" height="15.3" rx="3" fill="#000"/><rect x="15.2" y="9.6" width="13.8" height="10.6" fill="#e3f2fd" stroke="#000" stroke-width="1.3"/><rect x="14.6" y="25.6" width="14.8" height="8.8" fill="#e3f2fd" stroke="#000" stroke-width="1.3"/><path d="M18,27.9 H26 M18,31 H26" stroke="#555" stroke-width="1.2"/><circle cx="12" cy="26.8" r="0.8" fill="#e3f2fd"/><circle cx="32" cy="26.8" r="0.8" fill="#e3f2fd"/></g>
<g transform="translate(1892.6,553.4) rotate(31)" fill="#000"><rect x="-3.9" y="-14.8" width="7.8" height="3.6" rx="1.6"/><rect x="-3.9" y="-9.4" width="7.8" height="14.4"/><path d="M-3.9,6.6 H3.9 L-0.3,14.6Z"/></g>
<g transform="translate(1942,531)"><rect x="9" y="14.3" width="26" height="15.3" rx="3" fill="#000"/><rect x="15.2" y="9.6" width="13.8" height="10.6" fill="#e3f2fd" stroke="#000" stroke-width="1.3"/><rect x="14.6" y="25.6" width="14.8" height="8.8" fill="#e3f2fd" stroke="#000" stroke-width="1.3"/><path d="M18,27.9 H26 M18,31 H26" stroke="#555" stroke-width="1.2"/><circle cx="12" cy="26.8" r="0.8" fill="#e3f2fd"/><circle cx="32" cy="26.8" r="0.8" fill="#e3f2fd"/></g>
<g transform="translate(1892.6,613.4) rotate(31)" fill="#000"><rect x="-3.9" y="-14.8" width="7.8" height="3.6" rx="1.6"/><rect x="-3.9" y="-9.4" width="7.8" height="14.4"/><path d="M-3.9,6.6 H3.9 L-0.3,14.6Z"/></g>
<g transform="translate(1942,591)"><rect x="9" y="14.3" width="26" height="15.3" rx="3" fill="#000"/><rect x="15.2" y="9.6" width="13.8" height="10.6" fill="#e3f2fd" stroke="#000" stroke-width="1.3"/><rect x="14.6" y="25.6" width="14.8" height="8.8" fill="#e3f2fd" stroke="#000" stroke-width="1.3"/><path d="M18,27.9 H26 M18,31 H26" stroke="#555" stroke-width="1.2"/><circle cx="12" cy="26.8" r="0.8" fill="#e3f2fd"/><circle cx="32" cy="26.8" r="0.8" fill="#e3f2fd"/></g>
<g transform="translate(1892.6,673.4) rotate(31)" fill="#000"><rect x="-3.9" y="-14.8" width="7.8" height="3.6" rx="1.6"/><rect x="-3.9" y="-9.4" width="7.8" height="14.4"/><path d="M-3.9,6.6 H3.9 L-0.3,14.6Z"/></g>
<g transform="translate(1942,651)"><rect x="9" y="14.3" width="26" height="15.3" rx="3" fill="#000"/><rect x="15.2" y="9.6" width="13.8" height="10.6" fill="#e3f2fd" stroke="#000" stroke-width="1.3"/><rect x="14.6" y="25.6" width="14.8" height="8.8" fill="#e3f2fd" stroke="#000" stroke-width="1.3"/><path d="M18,27.9 H26 M18,31 H26" stroke="#555" stroke-width="1.2"/><circle cx="12" cy="26.8" r="0.8" fill="#e3f2fd"/><circle cx="32" cy="26.8" r="0.8" fill="#e3f2fd"/></g>
<g transform="translate(1892.6,733.4) rotate(31)" fill="#000"><rect x="-3.9" y="-14.8" width="7.8" height="3.6" rx="1.6"/><rect x="-3.9" y="-9.4" width="7.8" height="14.4"/><path d="M-3.9,6.6 H3.9 L-0.3,14.6Z"/></g>
<g transform="translate(1942,711)"><rect x="9" y="14.3" width="26" height="15.3" rx="3" fill="#000"/><rect x="15.2" y="9.6" width="13.8" height="10.6" fill="#e3f2fd" stroke="#000" stroke-width="1.3"/><rect x="14.6" y="25.6" width="14.8" height="8.8" fill="#e3f2fd" stroke="#000" stroke-width="1.3"/><path d="M18,27.9 H26 M18,31 H26" stroke="#555" stroke-width="1.2"/><circle cx="12" cy="26.8" r="0.8" fill="#e3f2fd"/><circle cx="32" cy="26.8" r="0.8" fill="#e3f2fd"/></g>
<g transform="translate(1892.6,793.4) rotate(31)" fill="#000"><rect x="-3.9" y="-14.8" width="7.8" height="3.6" rx="1.6"/><rect x="-3.9" y="-9.4" width="7.8" height="14.4"/><path d="M-3.9,6.6 H3.9 L-0.3,14.6Z"/></g>
<g transform="translate(1942,771)"><rect x="9" y="14.3" width="26" height="15.3" rx="3" fill="#000"/><rect x="15.2" y="9.6" width="13.8" height="10.6" fill="#e3f2fd" stroke="#000" stroke-width="1.3"/><rect x="14.6" y="25.6" width="14.8" height="8.8" fill="#e3f2fd" stroke="#000" stroke-width="1.3"/><path d="M18,27.9 H26 M18,31 H26" stroke="#555" stroke-width="1.2"/><circle cx="12" cy="26.8" r="0.8" fill="#e3f2fd"/><circle cx="32" cy="26.8" r="0.8" fill="#e3f2fd"/></g>
<g transform="translate(1892.6,853.4) rotate(31)" fill="#000"><rect x="-3.9" y="-14.8" width="7.8" height="3.6" rx="1.6"/><rect x="-3.9" y="-9.4" width="7.8" height="14.4"/><path d="M-3.9,6.6 H3.9 L-0.3,14.6Z"/></g>
<g transform="translate(1942,831)"><rect x="9" y="14.3" width="26" height="15.3" rx="3" fill="#000"/><rect x="15.2" y="9.6" width="13.8" height="10.6" fill="#e3f2fd" stroke="#000" stroke-width="1.3"/><rect x="14.6" y="25.6" width="14.8" height="8.8" fill="#e3f2fd" stroke="#000" stroke-width="1.3"/><path d="M18,27.9 H26 M18,31 H26" stroke="#555" stroke-width="1.2"/><circle cx="12" cy="26.8" r="0.8" fill="#e3f2fd"/><circle cx="32" cy="26.8" r="0.8" fill="#e3f2fd"/></g>
<g transform="translate(1892.6,913.4) rotate(31)" fill="#000"><rect x="-3.9" y="-14.8" width="7.8" height="3.6" rx="1.6"/><rect x="-3.9" y="-9.4" width="7.8" height="14.4"/><path d="M-3.9,6.6 H3.9 L-0.3,14.6Z"/></g>
<g transform="translate(1942,891)"><rect x="9" y="14.3" width="26" height="15.3" rx="3" fill="#000"/><rect x="15.2" y="9.6" width="13.8" height="10.6" fill="#e3f2fd" stroke="#000" stroke-width="1.3"/><rect x="14.6" y="25.6" width="14.8" height="8.8" fill="#e3f2fd" stroke="#000" stroke-width="1.3"/><path d="M18,27.9 H26 M18,31 H26" stroke="#555" stroke-width="1.2"/><circle cx="12" cy="26.8" r="0.8" fill="#e3f2fd"/><circle cx="32" cy="26.8" r="0.8" fill="#e3f2fd"/></g>
<g transform="translate(1892.6,973.4) rotate(31)" fill="#000"><rect x="-3.9" y="-14.8" width="7.8" height="3.6" rx="1.6"/><rect x="-3.9" y="-9.4" width="7.8" height="14.4"/><path d="M-3.9,6.6 H3.9 L-0.3,14.6Z"/></g>
<g transform="translate(1942,951)"><rect x="9" y="14.3" width="26" height="15.3" rx="3" fill="#000"/><rect x="15.2" y="9.6" width="13.8" height="10.6" fill="#e3f2fd" stroke="#000" stroke-width="1.3"/><rect x="14.6" y="25.6" width="14.8" height="8.8" fill="#e3f2fd" stroke="#000" stroke-width="1.3"/><path d="M18,27.9 H26 M18,31 H26" stroke="#555" stroke-width="1.2"/><circle cx="12" cy="26.8" r="0.8" fill="#e3f2fd"/><circle cx="32" cy="26.8" r="0.8" fill="#e3f2fd"/></g>
<g transform="translate(1892.6,1033.4) rotate(31)" fill="#000"><rect x="-3.9" y="-14.8" width="7.8" height="3.6" rx="1.6"/><rect x="-3.9" y="-9.4" width="7.8" height="14.4"/><path d="M-3.9,6.6 H3.9 L-0.3,14.6Z"/></g>
<g transform="translate(1942,1011)"><rect x="9" y="14.3" width="26" height="15.3" rx="3" fill="#000"/><rect x="15.2" y="9.6" width="13.8" height="10.6" fill="#e3f2fd" stroke="#000" stroke-width="1.3"/><rect x="14.6" y="25.6" width="14.8" height="8.8" fill="#e3f2fd" stroke="#000" stroke-width="1.3"/><path d="M18,27.9 H26 M18,31 H26" stroke="#555" stroke-width="1.2"/><circle cx="12" cy="26.8" r="0.8" fill="#e3f2fd"/><circle cx="32" cy="26.8" r="0.8" fill="#e3f2fd"/></g>
<g transform="translate(1892.6,1093.4) rotate(31)" fill="#000"><rect x="-3.9" y="-14.8" width="7.8" height="3.6" rx="1.6"/><rect x="-3.9" y="-9.4" width="7.8" height="14.4"/><path d="M-3.9,6.6 H3.9 L-0.3,14.6Z"/></g>
<g transform="translate(1942,1071)"><rect x="9" y="14.3" width="26" height="15.3" rx="3" fill="#000"/><rect x="15.2" y="9.6" width="13.8" height="10.6" fill="#e3f2fd" stroke="#000" stroke-width="1.3"/><rect x="14.6" y="25.6" width="14.8" height="8.8" fill="#e3f2fd" stroke="#000" stroke-width="1.3"/><path d="M18,27.9 H26 M18,31 H26" stroke="#555" stroke-width="1.2"/><circle cx="12" cy="26.8" r="0.8" fill="#e3f2fd"/><circle cx="32" cy="26.8" r="0.8" fill="#e3f2fd"/></g>
<g transform="translate(1892.6,1153.4) rotate(31)" fill="#000"><rect x="-3.9" y="-14.8" width="7.8" height="3.6" rx="1.6"/><rect x="-3.9" y="-9.4" width="7.8" height="14.4"/><path d="M-3.9,6.6 H3.9 L-0.3,14.6Z"/></g>
<g transform="translate(1942,1131)"><rect x="9" y="14.3" width="26" height="15.3" rx="3" fill="#000"/><rect x="15.2" y="9.6" width="13.8" height="10.6" fill="#e3f2fd" stroke="#000" stroke-width="1.3"/><rect x="14.6" y="25.6" width="14.8" height="8.8" fill="#e3f2fd" stroke="#000" stroke-width="1.3"/><path d="M18,27.9 H26 M18,31 H26" stroke="#555" stroke-width="1.2"/><circle cx="12" cy="26.8" r="0.8" fill="#e3f2fd"/><circle cx="32" cy="26.8" r="0.8" fill="#e3f2fd"/></g>
<g transform="translate(1892.6,1213.4) rotate(31)" fill="#000"><rect x="-3.9" y="-14.8" width="7.8" height="3.6" rx="1.6"/><rect x="-3.9" y="-9.4" width="7.8" height="14.4"/><path d="M-3.9,6.6 H3.9 L-0.3,14.6Z"/></g>
<g transform="translate(1942,1191)"><rect x="9" y="14.3" width="26" height="15.3" rx="3" fill="#000"/><rect x="15.2" y="9.6" width="13.8" height="10.6" fill="#e3f2fd" stroke="#000" stroke-width="1.3"/><rect x="14.6" y="25.6" width="14.8" height="8.8" fill="#e3f2fd" stroke="#000" stroke-width="1.3"/><path d="M18,27.9 H26 M18,31 H26" stroke="#555" stroke-width="1.2"/><circle cx="12" cy="26.8" r="0.8" fill="#e3f2fd"/><circle cx="32" cy="26.8" r="0.8" fill="#e3f2fd"/></g>
<g transform="translate(1892.6,1273.4) rotate(31)" fill="#000"><rect x="-3.9" y="-14.8" width="7.8" height="3.6" rx="1.6"/><rect x="-3.9" y="-9.4" width="7.8" height="14.4"/><path d="M-3.9,6.6 H3.9 L-0.3,14.6Z"/></g>
<g transform="translate(1942,1251)"><rect x="9" y="14.3" width="26" height="15.3" rx="3" fill="#000"/><rect x="15.2" y="9.6" width="13.8" height="10.6" fill="#e3f2fd" stroke="#000" stroke-width="1.3"/><rect x="14.6" y="25.6" width="14.8" height="8.8" fill="#e3f2fd" stroke="#000" stroke-width="1.3"/><path d="M18,27.9 H26 M18,31 H26" stroke="#555" stroke-width="1.2"/><circle cx="12" cy="26.8" r="0.8" fill="#e3f2fd"/><circle cx="32" cy="26.8" r="0.8" fill="#e3f2fd"/></g>
<g transform="translate(1892.6,1333.4) rotate(31)" fill="#000"><rect x="-3.9" y="-14.8" width="7.8" height="3.6" rx="1.6"/><rect x="-3.9" y="-9.4" width="7.8" height="14.4"/><path d="M-3.9,6.6 H3.9 L-0.3,14.6Z"/></g>
<g transform="translate(1942,1311)"><rect x="9" y="14.3" width="26" height="15.3" rx="3" fill="#000"/><rect x="15.2" y="9.6" width="13.8" height="10.6" fill="#e3f2fd" stroke="#000" stroke-width="1.3"/><rect x="14.6" y="25.6" width="14.8" height="8.8" fill="#e3f2fd" stroke="#000" stroke-width="1.3"/><path d="M18,27.9 H26 M18,31 H26" stroke="#555" stroke-width="1.2"/><circle cx="12" cy="26.8" r="0.8" fill="#e3f2fd"/><circle cx="32" cy="26.8" r="0.8" fill="#e3f2fd"/></g>
<g transform="translate(1892.6,1393.4) rotate(31)" fill="#000"><rect x="-3.9" y="-14.8" width="7.8" height="3.6" rx="1.6"/><rect x="-3.9" y="-9.4" width="7.8" height="14.4"/><path d="M-3.9,6.6 H3.9 L-0.3,14.6Z"/></g>
<g transform="translate(1942,1371)"><rect x="9" y="14.3" width="26" height="15.3" rx="3" fill="#000"/><rect x="15.2" y="9.6" width="13.8" height="10.6" fill="#e3f2fd" stroke="#000" stroke-width="1.3"/><rect x="14.6" y="25.6" width="14.8" height="8.8" fill="#e3f2fd" stroke="#000" stroke-width="1.3"/><path d="M18,27.9 H26 M18,31 H26" stroke="#555" stroke-width="1.2"/><circle cx="12" cy="26.8" r="0.8" fill="#e3f2fd"/><circle cx="32" cy="26.8" r="0.8" fill="#e3f2fd"/></g>
<g transform="translate(1892.6,1453.4) rotate(31)" fill="#000"><rect x="-3.9" y="-14.8" width="7.8" height="3.6" rx="1.6"/><rect x="-3.9" y="-9.4" width="7.8" height="14.4"/><path d="M-3.9,6.6 H3.9 L-0.3,14.6Z"/></g>
<g transform="translate(1942,1431)"><rect x="9" y="14.3" width="26" height="15.3" rx="3" fill="#000"/><rect x="15.2" y="9.6" width="13.8" height="10.6" fill="#e3f2fd" stroke="#000" stroke-width="1.3"/><rect x="14.6" y="25.6" width="14.8" height="8.8" fill="#e3f2fd" stroke="#000" stroke-width="1.3"/><path d="M18,27.9 H26 M18,31 H26" stroke="#555" stroke-width="1.2"/><circle cx="12" cy="26.8" r="0.8" fill="#e3f2fd"/><circle cx="32" cy="26.8" r="0.8" fill="#e3f2fd"/></g>
</g>
<path d="M2010.5,246 L2017,239.5 L2023.5,246" fill="none" stroke="#a6a6a6" stroke-width="3.2"/><path d="M2010.5,1460 L2017,1466.8 L2023.5,1460" fill="none" stroke="#a6a6a6" stroke-width="3.2"/>
<rect x="713.65" y="86.55" width="187.7" height="76.6" rx="3.5" fill="none" stroke="#ff2e6d" stroke-width="6.5"/>
<rect x="5.2" y="380.2" width="304.9" height="67.5" rx="3" fill="none" stroke="#ff2e6d" stroke-width="6.5"/>
<g filter="url(#sh)" fill="#ff2e6d"><path d="M180.00,267.50 L179.98,270.51 L179.94,273.52 L179.86,276.54 L179.75,279.55 L179.62,282.56 L179.45,285.57 L179.26,288.59 L179.03,291.60 L178.78,294.61 L178.49,297.62 L178.18,300.63 L177.84,303.65 L177.46,306.66 L177.06,309.67 L176.63,312.68 L176.17,315.70 L175.67,318.71 L175.15,321.72 L174.60,324.73 L174.02,327.74 L173.41,330.76 L172.77,333.77 L172.10,336.78 L171.40,339.80 L159.60,336.10 L182.40,383.10 L205.20,336.10 L192.90,339.80 L192.20,336.79 L191.54,333.78 L190.90,330.77 L190.30,327.76 L189.72,324.74 L189.17,321.73 L188.65,318.72 L188.17,315.70 L187.71,312.69 L187.28,309.68 L186.88,306.67 L186.51,303.65 L186.17,300.64 L185.86,297.63 L185.58,294.61 L185.33,291.60 L185.11,288.59 L184.92,285.58 L184.76,282.56 L184.63,279.55 L184.53,276.54 L184.46,273.53 L184.41,270.51 L184.40,267.50Z"/><circle cx="182.2" cy="267.5" r="2.2"/><path d="M326.97,380.35 L341.24,372.50 L355.54,364.67 L369.84,356.88 L384.17,349.11 L398.51,341.37 L412.87,333.66 L427.24,325.98 L441.63,318.33 L456.03,310.70 L470.45,303.11 L484.89,295.54 L499.34,288.01 L513.81,280.50 L528.29,273.02 L542.79,265.57 L557.30,258.15 L571.84,250.76 L586.38,243.39 L600.95,236.06 L615.53,228.75 L630.12,221.48 L644.73,214.23 L659.36,207.01 L673.70,200.00 L677.10,212.20 L706.90,168.30 L654.20,170.30 L663.20,179.50 L649.00,188.23 L635.09,196.75 L621.17,205.24 L607.22,213.70 L593.27,222.13 L579.29,230.53 L565.30,238.91 L551.30,247.25 L537.27,255.57 L523.24,263.86 L509.18,272.11 L495.11,280.34 L481.03,288.54 L466.93,296.72 L452.81,304.86 L438.67,312.97 L424.53,321.06 L410.36,329.12 L396.18,337.14 L381.98,345.14 L367.77,353.11 L353.54,361.05 L339.29,368.97 L325.03,376.85Z"/><circle cx="326.0" cy="378.6" r="2.0"/></g>
</svg>
</body></html>
